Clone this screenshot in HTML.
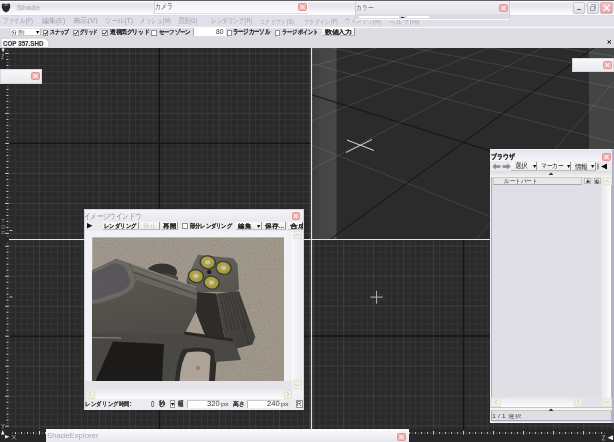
<!DOCTYPE html><html><head><meta charset="utf-8"><style>*{margin:0;padding:0;box-sizing:border-box}
html,body{width:614px;height:442px;overflow:hidden}
body{position:relative;background:#e2e2e9;font-family:"Liberation Sans",sans-serif;color:#222}
.a{position:absolute}
.t{position:absolute;white-space:nowrap;line-height:1;transform-origin:0 0}
.cb{position:absolute;width:5.5px;height:5.5px;background:#fff;border:1px solid #909090}
.close{position:absolute;width:8.5px;height:8px;border-radius:1.5px;background:radial-gradient(#f8c8c8,#eea2a2);border:1px solid #e49494}
.close:before,.close:after{content:"";position:absolute;left:2.7px;top:0px;width:1.1px;height:6px;background:#fff;opacity:.6}
.close:before{transform:rotate(45deg)}.close:after{transform:rotate(-45deg)}
.btn{position:absolute;background:linear-gradient(#fafafa,#ececec);border-right:1px solid #9a9a9a;border-bottom:1px solid #bdbdbd}
</style></head><body>
<svg class="a" style="left:0;top:0" width="614" height="442"><defs><clipPath id="v1"><rect x="9.5" y="47.5" width="301.5" height="191.5"/></clipPath><clipPath id="v2"><rect x="9.5" y="240" width="301.5" height="189.5"/></clipPath><clipPath id="v3"><rect x="312" y="240" width="302" height="189.5"/></clipPath><clipPath id="pv"><rect x="312" y="47.5" width="302" height="191.5"/></clipPath></defs><rect x="0" y="47" width="614" height="395" fill="#272727" /><rect x="9.5" y="47.5" width="301.5" height="191.5" fill="#2a2a2a" /><g clip-path="url(#v1)"><line x1="9.30" y1="47.50" x2="9.30" y2="239.00" stroke="#3f3f3f" stroke-width="1"/><line x1="15.30" y1="47.50" x2="15.30" y2="239.00" stroke="#353535" stroke-width="1"/><line x1="21.30" y1="47.50" x2="21.30" y2="239.00" stroke="#353535" stroke-width="1"/><line x1="27.30" y1="47.50" x2="27.30" y2="239.00" stroke="#353535" stroke-width="1"/><line x1="33.30" y1="47.50" x2="33.30" y2="239.00" stroke="#353535" stroke-width="1"/><line x1="39.30" y1="47.50" x2="39.30" y2="239.00" stroke="#3f3f3f" stroke-width="1"/><line x1="45.30" y1="47.50" x2="45.30" y2="239.00" stroke="#353535" stroke-width="1"/><line x1="51.30" y1="47.50" x2="51.30" y2="239.00" stroke="#353535" stroke-width="1"/><line x1="57.30" y1="47.50" x2="57.30" y2="239.00" stroke="#353535" stroke-width="1"/><line x1="63.30" y1="47.50" x2="63.30" y2="239.00" stroke="#353535" stroke-width="1"/><line x1="69.30" y1="47.50" x2="69.30" y2="239.00" stroke="#3f3f3f" stroke-width="1"/><line x1="75.30" y1="47.50" x2="75.30" y2="239.00" stroke="#353535" stroke-width="1"/><line x1="81.30" y1="47.50" x2="81.30" y2="239.00" stroke="#353535" stroke-width="1"/><line x1="87.30" y1="47.50" x2="87.30" y2="239.00" stroke="#353535" stroke-width="1"/><line x1="93.30" y1="47.50" x2="93.30" y2="239.00" stroke="#353535" stroke-width="1"/><line x1="99.30" y1="47.50" x2="99.30" y2="239.00" stroke="#3f3f3f" stroke-width="1"/><line x1="105.30" y1="47.50" x2="105.30" y2="239.00" stroke="#353535" stroke-width="1"/><line x1="111.30" y1="47.50" x2="111.30" y2="239.00" stroke="#353535" stroke-width="1"/><line x1="117.30" y1="47.50" x2="117.30" y2="239.00" stroke="#353535" stroke-width="1"/><line x1="123.30" y1="47.50" x2="123.30" y2="239.00" stroke="#353535" stroke-width="1"/><line x1="129.30" y1="47.50" x2="129.30" y2="239.00" stroke="#3f3f3f" stroke-width="1"/><line x1="135.30" y1="47.50" x2="135.30" y2="239.00" stroke="#353535" stroke-width="1"/><line x1="141.30" y1="47.50" x2="141.30" y2="239.00" stroke="#353535" stroke-width="1"/><line x1="147.30" y1="47.50" x2="147.30" y2="239.00" stroke="#353535" stroke-width="1"/><line x1="153.30" y1="47.50" x2="153.30" y2="239.00" stroke="#353535" stroke-width="1"/><line x1="165.30" y1="47.50" x2="165.30" y2="239.00" stroke="#353535" stroke-width="1"/><line x1="171.30" y1="47.50" x2="171.30" y2="239.00" stroke="#353535" stroke-width="1"/><line x1="177.30" y1="47.50" x2="177.30" y2="239.00" stroke="#353535" stroke-width="1"/><line x1="183.30" y1="47.50" x2="183.30" y2="239.00" stroke="#353535" stroke-width="1"/><line x1="189.30" y1="47.50" x2="189.30" y2="239.00" stroke="#3f3f3f" stroke-width="1"/><line x1="195.30" y1="47.50" x2="195.30" y2="239.00" stroke="#353535" stroke-width="1"/><line x1="201.30" y1="47.50" x2="201.30" y2="239.00" stroke="#353535" stroke-width="1"/><line x1="207.30" y1="47.50" x2="207.30" y2="239.00" stroke="#353535" stroke-width="1"/><line x1="213.30" y1="47.50" x2="213.30" y2="239.00" stroke="#353535" stroke-width="1"/><line x1="219.30" y1="47.50" x2="219.30" y2="239.00" stroke="#3f3f3f" stroke-width="1"/><line x1="225.30" y1="47.50" x2="225.30" y2="239.00" stroke="#353535" stroke-width="1"/><line x1="231.30" y1="47.50" x2="231.30" y2="239.00" stroke="#353535" stroke-width="1"/><line x1="237.30" y1="47.50" x2="237.30" y2="239.00" stroke="#353535" stroke-width="1"/><line x1="243.30" y1="47.50" x2="243.30" y2="239.00" stroke="#353535" stroke-width="1"/><line x1="249.30" y1="47.50" x2="249.30" y2="239.00" stroke="#3f3f3f" stroke-width="1"/><line x1="255.30" y1="47.50" x2="255.30" y2="239.00" stroke="#353535" stroke-width="1"/><line x1="261.30" y1="47.50" x2="261.30" y2="239.00" stroke="#353535" stroke-width="1"/><line x1="267.30" y1="47.50" x2="267.30" y2="239.00" stroke="#353535" stroke-width="1"/><line x1="273.30" y1="47.50" x2="273.30" y2="239.00" stroke="#353535" stroke-width="1"/><line x1="279.30" y1="47.50" x2="279.30" y2="239.00" stroke="#3f3f3f" stroke-width="1"/><line x1="285.30" y1="47.50" x2="285.30" y2="239.00" stroke="#353535" stroke-width="1"/><line x1="291.30" y1="47.50" x2="291.30" y2="239.00" stroke="#353535" stroke-width="1"/><line x1="297.30" y1="47.50" x2="297.30" y2="239.00" stroke="#353535" stroke-width="1"/><line x1="303.30" y1="47.50" x2="303.30" y2="239.00" stroke="#353535" stroke-width="1"/><line x1="309.30" y1="47.50" x2="309.30" y2="239.00" stroke="#3f3f3f" stroke-width="1"/><line x1="9.50" y1="47.40" x2="311.00" y2="47.40" stroke="#353535" stroke-width="1"/><line x1="9.50" y1="53.40" x2="311.00" y2="53.40" stroke="#3f3f3f" stroke-width="1"/><line x1="9.50" y1="59.40" x2="311.00" y2="59.40" stroke="#353535" stroke-width="1"/><line x1="9.50" y1="65.40" x2="311.00" y2="65.40" stroke="#353535" stroke-width="1"/><line x1="9.50" y1="71.40" x2="311.00" y2="71.40" stroke="#353535" stroke-width="1"/><line x1="9.50" y1="77.40" x2="311.00" y2="77.40" stroke="#353535" stroke-width="1"/><line x1="9.50" y1="83.40" x2="311.00" y2="83.40" stroke="#3f3f3f" stroke-width="1"/><line x1="9.50" y1="89.40" x2="311.00" y2="89.40" stroke="#353535" stroke-width="1"/><line x1="9.50" y1="95.40" x2="311.00" y2="95.40" stroke="#353535" stroke-width="1"/><line x1="9.50" y1="101.40" x2="311.00" y2="101.40" stroke="#353535" stroke-width="1"/><line x1="9.50" y1="107.40" x2="311.00" y2="107.40" stroke="#353535" stroke-width="1"/><line x1="9.50" y1="113.40" x2="311.00" y2="113.40" stroke="#3f3f3f" stroke-width="1"/><line x1="9.50" y1="119.40" x2="311.00" y2="119.40" stroke="#353535" stroke-width="1"/><line x1="9.50" y1="125.40" x2="311.00" y2="125.40" stroke="#353535" stroke-width="1"/><line x1="9.50" y1="131.40" x2="311.00" y2="131.40" stroke="#353535" stroke-width="1"/><line x1="9.50" y1="137.40" x2="311.00" y2="137.40" stroke="#353535" stroke-width="1"/><line x1="9.50" y1="149.40" x2="311.00" y2="149.40" stroke="#353535" stroke-width="1"/><line x1="9.50" y1="155.40" x2="311.00" y2="155.40" stroke="#353535" stroke-width="1"/><line x1="9.50" y1="161.40" x2="311.00" y2="161.40" stroke="#353535" stroke-width="1"/><line x1="9.50" y1="167.40" x2="311.00" y2="167.40" stroke="#353535" stroke-width="1"/><line x1="9.50" y1="173.40" x2="311.00" y2="173.40" stroke="#3f3f3f" stroke-width="1"/><line x1="9.50" y1="179.40" x2="311.00" y2="179.40" stroke="#353535" stroke-width="1"/><line x1="9.50" y1="185.40" x2="311.00" y2="185.40" stroke="#353535" stroke-width="1"/><line x1="9.50" y1="191.40" x2="311.00" y2="191.40" stroke="#353535" stroke-width="1"/><line x1="9.50" y1="197.40" x2="311.00" y2="197.40" stroke="#353535" stroke-width="1"/><line x1="9.50" y1="203.40" x2="311.00" y2="203.40" stroke="#3f3f3f" stroke-width="1"/><line x1="9.50" y1="209.40" x2="311.00" y2="209.40" stroke="#353535" stroke-width="1"/><line x1="9.50" y1="215.40" x2="311.00" y2="215.40" stroke="#353535" stroke-width="1"/><line x1="9.50" y1="221.40" x2="311.00" y2="221.40" stroke="#353535" stroke-width="1"/><line x1="9.50" y1="227.40" x2="311.00" y2="227.40" stroke="#353535" stroke-width="1"/><line x1="9.50" y1="233.40" x2="311.00" y2="233.40" stroke="#3f3f3f" stroke-width="1"/><line x1="159.30" y1="47.50" x2="159.30" y2="239.00" stroke="#141414" stroke-width="1.3"/><line x1="9.50" y1="143.40" x2="311.00" y2="143.40" stroke="#141414" stroke-width="1.3"/></g><rect x="9.5" y="240" width="301.5" height="189.5" fill="#2a2a2a" /><g clip-path="url(#v2)"><line x1="9.50" y1="240.00" x2="9.50" y2="429.50" stroke="#3f3f3f" stroke-width="1"/><line x1="15.50" y1="240.00" x2="15.50" y2="429.50" stroke="#353535" stroke-width="1"/><line x1="21.50" y1="240.00" x2="21.50" y2="429.50" stroke="#353535" stroke-width="1"/><line x1="27.50" y1="240.00" x2="27.50" y2="429.50" stroke="#353535" stroke-width="1"/><line x1="33.50" y1="240.00" x2="33.50" y2="429.50" stroke="#353535" stroke-width="1"/><line x1="39.50" y1="240.00" x2="39.50" y2="429.50" stroke="#3f3f3f" stroke-width="1"/><line x1="45.50" y1="240.00" x2="45.50" y2="429.50" stroke="#353535" stroke-width="1"/><line x1="51.50" y1="240.00" x2="51.50" y2="429.50" stroke="#353535" stroke-width="1"/><line x1="57.50" y1="240.00" x2="57.50" y2="429.50" stroke="#353535" stroke-width="1"/><line x1="63.50" y1="240.00" x2="63.50" y2="429.50" stroke="#353535" stroke-width="1"/><line x1="69.50" y1="240.00" x2="69.50" y2="429.50" stroke="#3f3f3f" stroke-width="1"/><line x1="75.50" y1="240.00" x2="75.50" y2="429.50" stroke="#353535" stroke-width="1"/><line x1="81.50" y1="240.00" x2="81.50" y2="429.50" stroke="#353535" stroke-width="1"/><line x1="87.50" y1="240.00" x2="87.50" y2="429.50" stroke="#353535" stroke-width="1"/><line x1="93.50" y1="240.00" x2="93.50" y2="429.50" stroke="#353535" stroke-width="1"/><line x1="99.50" y1="240.00" x2="99.50" y2="429.50" stroke="#3f3f3f" stroke-width="1"/><line x1="105.50" y1="240.00" x2="105.50" y2="429.50" stroke="#353535" stroke-width="1"/><line x1="111.50" y1="240.00" x2="111.50" y2="429.50" stroke="#353535" stroke-width="1"/><line x1="117.50" y1="240.00" x2="117.50" y2="429.50" stroke="#353535" stroke-width="1"/><line x1="123.50" y1="240.00" x2="123.50" y2="429.50" stroke="#353535" stroke-width="1"/><line x1="129.50" y1="240.00" x2="129.50" y2="429.50" stroke="#3f3f3f" stroke-width="1"/><line x1="135.50" y1="240.00" x2="135.50" y2="429.50" stroke="#353535" stroke-width="1"/><line x1="141.50" y1="240.00" x2="141.50" y2="429.50" stroke="#353535" stroke-width="1"/><line x1="147.50" y1="240.00" x2="147.50" y2="429.50" stroke="#353535" stroke-width="1"/><line x1="153.50" y1="240.00" x2="153.50" y2="429.50" stroke="#353535" stroke-width="1"/><line x1="165.50" y1="240.00" x2="165.50" y2="429.50" stroke="#353535" stroke-width="1"/><line x1="171.50" y1="240.00" x2="171.50" y2="429.50" stroke="#353535" stroke-width="1"/><line x1="177.50" y1="240.00" x2="177.50" y2="429.50" stroke="#353535" stroke-width="1"/><line x1="183.50" y1="240.00" x2="183.50" y2="429.50" stroke="#353535" stroke-width="1"/><line x1="189.50" y1="240.00" x2="189.50" y2="429.50" stroke="#3f3f3f" stroke-width="1"/><line x1="195.50" y1="240.00" x2="195.50" y2="429.50" stroke="#353535" stroke-width="1"/><line x1="201.50" y1="240.00" x2="201.50" y2="429.50" stroke="#353535" stroke-width="1"/><line x1="207.50" y1="240.00" x2="207.50" y2="429.50" stroke="#353535" stroke-width="1"/><line x1="213.50" y1="240.00" x2="213.50" y2="429.50" stroke="#353535" stroke-width="1"/><line x1="219.50" y1="240.00" x2="219.50" y2="429.50" stroke="#3f3f3f" stroke-width="1"/><line x1="225.50" y1="240.00" x2="225.50" y2="429.50" stroke="#353535" stroke-width="1"/><line x1="231.50" y1="240.00" x2="231.50" y2="429.50" stroke="#353535" stroke-width="1"/><line x1="237.50" y1="240.00" x2="237.50" y2="429.50" stroke="#353535" stroke-width="1"/><line x1="243.50" y1="240.00" x2="243.50" y2="429.50" stroke="#353535" stroke-width="1"/><line x1="249.50" y1="240.00" x2="249.50" y2="429.50" stroke="#3f3f3f" stroke-width="1"/><line x1="255.50" y1="240.00" x2="255.50" y2="429.50" stroke="#353535" stroke-width="1"/><line x1="261.50" y1="240.00" x2="261.50" y2="429.50" stroke="#353535" stroke-width="1"/><line x1="267.50" y1="240.00" x2="267.50" y2="429.50" stroke="#353535" stroke-width="1"/><line x1="273.50" y1="240.00" x2="273.50" y2="429.50" stroke="#353535" stroke-width="1"/><line x1="279.50" y1="240.00" x2="279.50" y2="429.50" stroke="#3f3f3f" stroke-width="1"/><line x1="285.50" y1="240.00" x2="285.50" y2="429.50" stroke="#353535" stroke-width="1"/><line x1="291.50" y1="240.00" x2="291.50" y2="429.50" stroke="#353535" stroke-width="1"/><line x1="297.50" y1="240.00" x2="297.50" y2="429.50" stroke="#353535" stroke-width="1"/><line x1="303.50" y1="240.00" x2="303.50" y2="429.50" stroke="#353535" stroke-width="1"/><line x1="309.50" y1="240.00" x2="309.50" y2="429.50" stroke="#3f3f3f" stroke-width="1"/><line x1="9.50" y1="234.20" x2="311.00" y2="234.20" stroke="#353535" stroke-width="1"/><line x1="9.50" y1="240.20" x2="311.00" y2="240.20" stroke="#353535" stroke-width="1"/><line x1="9.50" y1="246.20" x2="311.00" y2="246.20" stroke="#3f3f3f" stroke-width="1"/><line x1="9.50" y1="252.20" x2="311.00" y2="252.20" stroke="#353535" stroke-width="1"/><line x1="9.50" y1="258.20" x2="311.00" y2="258.20" stroke="#353535" stroke-width="1"/><line x1="9.50" y1="264.20" x2="311.00" y2="264.20" stroke="#353535" stroke-width="1"/><line x1="9.50" y1="270.20" x2="311.00" y2="270.20" stroke="#353535" stroke-width="1"/><line x1="9.50" y1="276.20" x2="311.00" y2="276.20" stroke="#3f3f3f" stroke-width="1"/><line x1="9.50" y1="282.20" x2="311.00" y2="282.20" stroke="#353535" stroke-width="1"/><line x1="9.50" y1="288.20" x2="311.00" y2="288.20" stroke="#353535" stroke-width="1"/><line x1="9.50" y1="294.20" x2="311.00" y2="294.20" stroke="#353535" stroke-width="1"/><line x1="9.50" y1="300.20" x2="311.00" y2="300.20" stroke="#353535" stroke-width="1"/><line x1="9.50" y1="306.20" x2="311.00" y2="306.20" stroke="#3f3f3f" stroke-width="1"/><line x1="9.50" y1="312.20" x2="311.00" y2="312.20" stroke="#353535" stroke-width="1"/><line x1="9.50" y1="318.20" x2="311.00" y2="318.20" stroke="#353535" stroke-width="1"/><line x1="9.50" y1="324.20" x2="311.00" y2="324.20" stroke="#353535" stroke-width="1"/><line x1="9.50" y1="330.20" x2="311.00" y2="330.20" stroke="#353535" stroke-width="1"/><line x1="9.50" y1="342.20" x2="311.00" y2="342.20" stroke="#353535" stroke-width="1"/><line x1="9.50" y1="348.20" x2="311.00" y2="348.20" stroke="#353535" stroke-width="1"/><line x1="9.50" y1="354.20" x2="311.00" y2="354.20" stroke="#353535" stroke-width="1"/><line x1="9.50" y1="360.20" x2="311.00" y2="360.20" stroke="#353535" stroke-width="1"/><line x1="9.50" y1="366.20" x2="311.00" y2="366.20" stroke="#3f3f3f" stroke-width="1"/><line x1="9.50" y1="372.20" x2="311.00" y2="372.20" stroke="#353535" stroke-width="1"/><line x1="9.50" y1="378.20" x2="311.00" y2="378.20" stroke="#353535" stroke-width="1"/><line x1="9.50" y1="384.20" x2="311.00" y2="384.20" stroke="#353535" stroke-width="1"/><line x1="9.50" y1="390.20" x2="311.00" y2="390.20" stroke="#353535" stroke-width="1"/><line x1="9.50" y1="396.20" x2="311.00" y2="396.20" stroke="#3f3f3f" stroke-width="1"/><line x1="9.50" y1="402.20" x2="311.00" y2="402.20" stroke="#353535" stroke-width="1"/><line x1="9.50" y1="408.20" x2="311.00" y2="408.20" stroke="#353535" stroke-width="1"/><line x1="9.50" y1="414.20" x2="311.00" y2="414.20" stroke="#353535" stroke-width="1"/><line x1="9.50" y1="420.20" x2="311.00" y2="420.20" stroke="#353535" stroke-width="1"/><line x1="9.50" y1="426.20" x2="311.00" y2="426.20" stroke="#3f3f3f" stroke-width="1"/><line x1="159.50" y1="240.00" x2="159.50" y2="429.50" stroke="#141414" stroke-width="1.3"/><line x1="9.50" y1="336.20" x2="311.00" y2="336.20" stroke="#141414" stroke-width="1.3"/></g><rect x="312" y="240" width="302" height="189.5" fill="#2a2a2a" /><g clip-path="url(#v3)"><line x1="307.60" y1="240.00" x2="307.60" y2="429.50" stroke="#353535" stroke-width="1"/><line x1="313.60" y1="240.00" x2="313.60" y2="429.50" stroke="#3f3f3f" stroke-width="1"/><line x1="319.60" y1="240.00" x2="319.60" y2="429.50" stroke="#353535" stroke-width="1"/><line x1="325.60" y1="240.00" x2="325.60" y2="429.50" stroke="#353535" stroke-width="1"/><line x1="331.60" y1="240.00" x2="331.60" y2="429.50" stroke="#353535" stroke-width="1"/><line x1="337.60" y1="240.00" x2="337.60" y2="429.50" stroke="#353535" stroke-width="1"/><line x1="343.60" y1="240.00" x2="343.60" y2="429.50" stroke="#3f3f3f" stroke-width="1"/><line x1="349.60" y1="240.00" x2="349.60" y2="429.50" stroke="#353535" stroke-width="1"/><line x1="355.60" y1="240.00" x2="355.60" y2="429.50" stroke="#353535" stroke-width="1"/><line x1="361.60" y1="240.00" x2="361.60" y2="429.50" stroke="#353535" stroke-width="1"/><line x1="367.60" y1="240.00" x2="367.60" y2="429.50" stroke="#353535" stroke-width="1"/><line x1="373.60" y1="240.00" x2="373.60" y2="429.50" stroke="#3f3f3f" stroke-width="1"/><line x1="379.60" y1="240.00" x2="379.60" y2="429.50" stroke="#353535" stroke-width="1"/><line x1="385.60" y1="240.00" x2="385.60" y2="429.50" stroke="#353535" stroke-width="1"/><line x1="391.60" y1="240.00" x2="391.60" y2="429.50" stroke="#353535" stroke-width="1"/><line x1="397.60" y1="240.00" x2="397.60" y2="429.50" stroke="#353535" stroke-width="1"/><line x1="403.60" y1="240.00" x2="403.60" y2="429.50" stroke="#3f3f3f" stroke-width="1"/><line x1="409.60" y1="240.00" x2="409.60" y2="429.50" stroke="#353535" stroke-width="1"/><line x1="415.60" y1="240.00" x2="415.60" y2="429.50" stroke="#353535" stroke-width="1"/><line x1="421.60" y1="240.00" x2="421.60" y2="429.50" stroke="#353535" stroke-width="1"/><line x1="427.60" y1="240.00" x2="427.60" y2="429.50" stroke="#353535" stroke-width="1"/><line x1="433.60" y1="240.00" x2="433.60" y2="429.50" stroke="#3f3f3f" stroke-width="1"/><line x1="439.60" y1="240.00" x2="439.60" y2="429.50" stroke="#353535" stroke-width="1"/><line x1="445.60" y1="240.00" x2="445.60" y2="429.50" stroke="#353535" stroke-width="1"/><line x1="451.60" y1="240.00" x2="451.60" y2="429.50" stroke="#353535" stroke-width="1"/><line x1="457.60" y1="240.00" x2="457.60" y2="429.50" stroke="#353535" stroke-width="1"/><line x1="469.60" y1="240.00" x2="469.60" y2="429.50" stroke="#353535" stroke-width="1"/><line x1="475.60" y1="240.00" x2="475.60" y2="429.50" stroke="#353535" stroke-width="1"/><line x1="481.60" y1="240.00" x2="481.60" y2="429.50" stroke="#353535" stroke-width="1"/><line x1="487.60" y1="240.00" x2="487.60" y2="429.50" stroke="#353535" stroke-width="1"/><line x1="493.60" y1="240.00" x2="493.60" y2="429.50" stroke="#3f3f3f" stroke-width="1"/><line x1="499.60" y1="240.00" x2="499.60" y2="429.50" stroke="#353535" stroke-width="1"/><line x1="505.60" y1="240.00" x2="505.60" y2="429.50" stroke="#353535" stroke-width="1"/><line x1="511.60" y1="240.00" x2="511.60" y2="429.50" stroke="#353535" stroke-width="1"/><line x1="517.60" y1="240.00" x2="517.60" y2="429.50" stroke="#353535" stroke-width="1"/><line x1="523.60" y1="240.00" x2="523.60" y2="429.50" stroke="#3f3f3f" stroke-width="1"/><line x1="529.60" y1="240.00" x2="529.60" y2="429.50" stroke="#353535" stroke-width="1"/><line x1="535.60" y1="240.00" x2="535.60" y2="429.50" stroke="#353535" stroke-width="1"/><line x1="541.60" y1="240.00" x2="541.60" y2="429.50" stroke="#353535" stroke-width="1"/><line x1="547.60" y1="240.00" x2="547.60" y2="429.50" stroke="#353535" stroke-width="1"/><line x1="553.60" y1="240.00" x2="553.60" y2="429.50" stroke="#3f3f3f" stroke-width="1"/><line x1="559.60" y1="240.00" x2="559.60" y2="429.50" stroke="#353535" stroke-width="1"/><line x1="565.60" y1="240.00" x2="565.60" y2="429.50" stroke="#353535" stroke-width="1"/><line x1="571.60" y1="240.00" x2="571.60" y2="429.50" stroke="#353535" stroke-width="1"/><line x1="577.60" y1="240.00" x2="577.60" y2="429.50" stroke="#353535" stroke-width="1"/><line x1="583.60" y1="240.00" x2="583.60" y2="429.50" stroke="#3f3f3f" stroke-width="1"/><line x1="589.60" y1="240.00" x2="589.60" y2="429.50" stroke="#353535" stroke-width="1"/><line x1="595.60" y1="240.00" x2="595.60" y2="429.50" stroke="#353535" stroke-width="1"/><line x1="601.60" y1="240.00" x2="601.60" y2="429.50" stroke="#353535" stroke-width="1"/><line x1="607.60" y1="240.00" x2="607.60" y2="429.50" stroke="#353535" stroke-width="1"/><line x1="613.60" y1="240.00" x2="613.60" y2="429.50" stroke="#3f3f3f" stroke-width="1"/><line x1="312.00" y1="240.00" x2="614.00" y2="240.00" stroke="#353535" stroke-width="1"/><line x1="312.00" y1="246.00" x2="614.00" y2="246.00" stroke="#3f3f3f" stroke-width="1"/><line x1="312.00" y1="252.00" x2="614.00" y2="252.00" stroke="#353535" stroke-width="1"/><line x1="312.00" y1="258.00" x2="614.00" y2="258.00" stroke="#353535" stroke-width="1"/><line x1="312.00" y1="264.00" x2="614.00" y2="264.00" stroke="#353535" stroke-width="1"/><line x1="312.00" y1="270.00" x2="614.00" y2="270.00" stroke="#353535" stroke-width="1"/><line x1="312.00" y1="276.00" x2="614.00" y2="276.00" stroke="#3f3f3f" stroke-width="1"/><line x1="312.00" y1="282.00" x2="614.00" y2="282.00" stroke="#353535" stroke-width="1"/><line x1="312.00" y1="288.00" x2="614.00" y2="288.00" stroke="#353535" stroke-width="1"/><line x1="312.00" y1="294.00" x2="614.00" y2="294.00" stroke="#353535" stroke-width="1"/><line x1="312.00" y1="300.00" x2="614.00" y2="300.00" stroke="#353535" stroke-width="1"/><line x1="312.00" y1="306.00" x2="614.00" y2="306.00" stroke="#3f3f3f" stroke-width="1"/><line x1="312.00" y1="312.00" x2="614.00" y2="312.00" stroke="#353535" stroke-width="1"/><line x1="312.00" y1="318.00" x2="614.00" y2="318.00" stroke="#353535" stroke-width="1"/><line x1="312.00" y1="324.00" x2="614.00" y2="324.00" stroke="#353535" stroke-width="1"/><line x1="312.00" y1="330.00" x2="614.00" y2="330.00" stroke="#353535" stroke-width="1"/><line x1="312.00" y1="342.00" x2="614.00" y2="342.00" stroke="#353535" stroke-width="1"/><line x1="312.00" y1="348.00" x2="614.00" y2="348.00" stroke="#353535" stroke-width="1"/><line x1="312.00" y1="354.00" x2="614.00" y2="354.00" stroke="#353535" stroke-width="1"/><line x1="312.00" y1="360.00" x2="614.00" y2="360.00" stroke="#353535" stroke-width="1"/><line x1="312.00" y1="366.00" x2="614.00" y2="366.00" stroke="#3f3f3f" stroke-width="1"/><line x1="312.00" y1="372.00" x2="614.00" y2="372.00" stroke="#353535" stroke-width="1"/><line x1="312.00" y1="378.00" x2="614.00" y2="378.00" stroke="#353535" stroke-width="1"/><line x1="312.00" y1="384.00" x2="614.00" y2="384.00" stroke="#353535" stroke-width="1"/><line x1="312.00" y1="390.00" x2="614.00" y2="390.00" stroke="#353535" stroke-width="1"/><line x1="312.00" y1="396.00" x2="614.00" y2="396.00" stroke="#3f3f3f" stroke-width="1"/><line x1="312.00" y1="402.00" x2="614.00" y2="402.00" stroke="#353535" stroke-width="1"/><line x1="312.00" y1="408.00" x2="614.00" y2="408.00" stroke="#353535" stroke-width="1"/><line x1="312.00" y1="414.00" x2="614.00" y2="414.00" stroke="#353535" stroke-width="1"/><line x1="312.00" y1="420.00" x2="614.00" y2="420.00" stroke="#353535" stroke-width="1"/><line x1="312.00" y1="426.00" x2="614.00" y2="426.00" stroke="#3f3f3f" stroke-width="1"/><line x1="463.60" y1="240.00" x2="463.60" y2="429.50" stroke="#141414" stroke-width="1.3"/><line x1="312.00" y1="336.00" x2="614.00" y2="336.00" stroke="#141414" stroke-width="1.3"/></g><line x1="7.00" y1="50.40" x2="8.30" y2="50.40" stroke="#707070" stroke-width="1"/><line x1="5.30" y1="53.40" x2="8.80" y2="53.40" stroke="#dcdcdc" stroke-width="1"/><line x1="7.00" y1="56.40" x2="8.30" y2="56.40" stroke="#707070" stroke-width="1"/><line x1="6.30" y1="59.40" x2="8.50" y2="59.40" stroke="#c4c4c4" stroke-width="1"/><line x1="7.00" y1="62.40" x2="8.30" y2="62.40" stroke="#707070" stroke-width="1"/><line x1="6.30" y1="65.40" x2="8.50" y2="65.40" stroke="#c4c4c4" stroke-width="1"/><line x1="7.00" y1="68.40" x2="8.30" y2="68.40" stroke="#707070" stroke-width="1"/><line x1="6.30" y1="71.40" x2="8.50" y2="71.40" stroke="#c4c4c4" stroke-width="1"/><line x1="7.00" y1="74.40" x2="8.30" y2="74.40" stroke="#707070" stroke-width="1"/><line x1="6.30" y1="77.40" x2="8.50" y2="77.40" stroke="#c4c4c4" stroke-width="1"/><line x1="7.00" y1="80.40" x2="8.30" y2="80.40" stroke="#707070" stroke-width="1"/><line x1="5.30" y1="83.40" x2="8.80" y2="83.40" stroke="#dcdcdc" stroke-width="1"/><line x1="7.00" y1="86.40" x2="8.30" y2="86.40" stroke="#707070" stroke-width="1"/><line x1="6.30" y1="89.40" x2="8.50" y2="89.40" stroke="#c4c4c4" stroke-width="1"/><line x1="7.00" y1="92.40" x2="8.30" y2="92.40" stroke="#707070" stroke-width="1"/><line x1="6.30" y1="95.40" x2="8.50" y2="95.40" stroke="#c4c4c4" stroke-width="1"/><line x1="7.00" y1="98.40" x2="8.30" y2="98.40" stroke="#707070" stroke-width="1"/><line x1="6.30" y1="101.40" x2="8.50" y2="101.40" stroke="#c4c4c4" stroke-width="1"/><line x1="7.00" y1="104.40" x2="8.30" y2="104.40" stroke="#707070" stroke-width="1"/><line x1="6.30" y1="107.40" x2="8.50" y2="107.40" stroke="#c4c4c4" stroke-width="1"/><line x1="7.00" y1="110.40" x2="8.30" y2="110.40" stroke="#707070" stroke-width="1"/><line x1="5.30" y1="113.40" x2="8.80" y2="113.40" stroke="#dcdcdc" stroke-width="1"/><line x1="7.00" y1="116.40" x2="8.30" y2="116.40" stroke="#707070" stroke-width="1"/><line x1="6.30" y1="119.40" x2="8.50" y2="119.40" stroke="#c4c4c4" stroke-width="1"/><line x1="7.00" y1="122.40" x2="8.30" y2="122.40" stroke="#707070" stroke-width="1"/><line x1="6.30" y1="125.40" x2="8.50" y2="125.40" stroke="#c4c4c4" stroke-width="1"/><line x1="7.00" y1="128.40" x2="8.30" y2="128.40" stroke="#707070" stroke-width="1"/><line x1="6.30" y1="131.40" x2="8.50" y2="131.40" stroke="#c4c4c4" stroke-width="1"/><line x1="7.00" y1="134.40" x2="8.30" y2="134.40" stroke="#707070" stroke-width="1"/><line x1="6.30" y1="137.40" x2="8.50" y2="137.40" stroke="#c4c4c4" stroke-width="1"/><line x1="7.00" y1="140.40" x2="8.30" y2="140.40" stroke="#707070" stroke-width="1"/><line x1="5.30" y1="143.40" x2="8.80" y2="143.40" stroke="#dcdcdc" stroke-width="1"/><line x1="7.00" y1="146.40" x2="8.30" y2="146.40" stroke="#707070" stroke-width="1"/><line x1="6.30" y1="149.40" x2="8.50" y2="149.40" stroke="#c4c4c4" stroke-width="1"/><line x1="7.00" y1="152.40" x2="8.30" y2="152.40" stroke="#707070" stroke-width="1"/><line x1="6.30" y1="155.40" x2="8.50" y2="155.40" stroke="#c4c4c4" stroke-width="1"/><line x1="7.00" y1="158.40" x2="8.30" y2="158.40" stroke="#707070" stroke-width="1"/><line x1="6.30" y1="161.40" x2="8.50" y2="161.40" stroke="#c4c4c4" stroke-width="1"/><line x1="7.00" y1="164.40" x2="8.30" y2="164.40" stroke="#707070" stroke-width="1"/><line x1="6.30" y1="167.40" x2="8.50" y2="167.40" stroke="#c4c4c4" stroke-width="1"/><line x1="7.00" y1="170.40" x2="8.30" y2="170.40" stroke="#707070" stroke-width="1"/><line x1="5.30" y1="173.40" x2="8.80" y2="173.40" stroke="#dcdcdc" stroke-width="1"/><line x1="7.00" y1="176.40" x2="8.30" y2="176.40" stroke="#707070" stroke-width="1"/><line x1="6.30" y1="179.40" x2="8.50" y2="179.40" stroke="#c4c4c4" stroke-width="1"/><line x1="7.00" y1="182.40" x2="8.30" y2="182.40" stroke="#707070" stroke-width="1"/><line x1="6.30" y1="185.40" x2="8.50" y2="185.40" stroke="#c4c4c4" stroke-width="1"/><line x1="7.00" y1="188.40" x2="8.30" y2="188.40" stroke="#707070" stroke-width="1"/><line x1="6.30" y1="191.40" x2="8.50" y2="191.40" stroke="#c4c4c4" stroke-width="1"/><line x1="7.00" y1="194.40" x2="8.30" y2="194.40" stroke="#707070" stroke-width="1"/><line x1="6.30" y1="197.40" x2="8.50" y2="197.40" stroke="#c4c4c4" stroke-width="1"/><line x1="7.00" y1="200.40" x2="8.30" y2="200.40" stroke="#707070" stroke-width="1"/><line x1="5.30" y1="203.40" x2="8.80" y2="203.40" stroke="#dcdcdc" stroke-width="1"/><line x1="7.00" y1="206.40" x2="8.30" y2="206.40" stroke="#707070" stroke-width="1"/><line x1="6.30" y1="209.40" x2="8.50" y2="209.40" stroke="#c4c4c4" stroke-width="1"/><line x1="7.00" y1="212.40" x2="8.30" y2="212.40" stroke="#707070" stroke-width="1"/><line x1="6.30" y1="215.40" x2="8.50" y2="215.40" stroke="#c4c4c4" stroke-width="1"/><line x1="7.00" y1="218.40" x2="8.30" y2="218.40" stroke="#707070" stroke-width="1"/><line x1="6.30" y1="221.40" x2="8.50" y2="221.40" stroke="#c4c4c4" stroke-width="1"/><line x1="7.00" y1="224.40" x2="8.30" y2="224.40" stroke="#707070" stroke-width="1"/><line x1="6.30" y1="227.40" x2="8.50" y2="227.40" stroke="#c4c4c4" stroke-width="1"/><line x1="7.00" y1="230.40" x2="8.30" y2="230.40" stroke="#707070" stroke-width="1"/><line x1="5.30" y1="233.40" x2="8.80" y2="233.40" stroke="#dcdcdc" stroke-width="1"/><line x1="7.00" y1="236.40" x2="8.30" y2="236.40" stroke="#707070" stroke-width="1"/><line x1="7.00" y1="243.20" x2="8.30" y2="243.20" stroke="#707070" stroke-width="1"/><line x1="5.30" y1="246.20" x2="8.80" y2="246.20" stroke="#dcdcdc" stroke-width="1"/><line x1="7.00" y1="249.20" x2="8.30" y2="249.20" stroke="#707070" stroke-width="1"/><line x1="6.30" y1="252.20" x2="8.50" y2="252.20" stroke="#c4c4c4" stroke-width="1"/><line x1="7.00" y1="255.20" x2="8.30" y2="255.20" stroke="#707070" stroke-width="1"/><line x1="6.30" y1="258.20" x2="8.50" y2="258.20" stroke="#c4c4c4" stroke-width="1"/><line x1="7.00" y1="261.20" x2="8.30" y2="261.20" stroke="#707070" stroke-width="1"/><line x1="6.30" y1="264.20" x2="8.50" y2="264.20" stroke="#c4c4c4" stroke-width="1"/><line x1="7.00" y1="267.20" x2="8.30" y2="267.20" stroke="#707070" stroke-width="1"/><line x1="6.30" y1="270.20" x2="8.50" y2="270.20" stroke="#c4c4c4" stroke-width="1"/><line x1="7.00" y1="273.20" x2="8.30" y2="273.20" stroke="#707070" stroke-width="1"/><line x1="5.30" y1="276.20" x2="8.80" y2="276.20" stroke="#dcdcdc" stroke-width="1"/><line x1="7.00" y1="279.20" x2="8.30" y2="279.20" stroke="#707070" stroke-width="1"/><line x1="6.30" y1="282.20" x2="8.50" y2="282.20" stroke="#c4c4c4" stroke-width="1"/><line x1="7.00" y1="285.20" x2="8.30" y2="285.20" stroke="#707070" stroke-width="1"/><line x1="6.30" y1="288.20" x2="8.50" y2="288.20" stroke="#c4c4c4" stroke-width="1"/><line x1="7.00" y1="291.20" x2="8.30" y2="291.20" stroke="#707070" stroke-width="1"/><line x1="6.30" y1="294.20" x2="8.50" y2="294.20" stroke="#c4c4c4" stroke-width="1"/><line x1="7.00" y1="297.20" x2="8.30" y2="297.20" stroke="#707070" stroke-width="1"/><line x1="6.30" y1="300.20" x2="8.50" y2="300.20" stroke="#c4c4c4" stroke-width="1"/><line x1="7.00" y1="303.20" x2="8.30" y2="303.20" stroke="#707070" stroke-width="1"/><line x1="5.30" y1="306.20" x2="8.80" y2="306.20" stroke="#dcdcdc" stroke-width="1"/><line x1="7.00" y1="309.20" x2="8.30" y2="309.20" stroke="#707070" stroke-width="1"/><line x1="6.30" y1="312.20" x2="8.50" y2="312.20" stroke="#c4c4c4" stroke-width="1"/><line x1="7.00" y1="315.20" x2="8.30" y2="315.20" stroke="#707070" stroke-width="1"/><line x1="6.30" y1="318.20" x2="8.50" y2="318.20" stroke="#c4c4c4" stroke-width="1"/><line x1="7.00" y1="321.20" x2="8.30" y2="321.20" stroke="#707070" stroke-width="1"/><line x1="6.30" y1="324.20" x2="8.50" y2="324.20" stroke="#c4c4c4" stroke-width="1"/><line x1="7.00" y1="327.20" x2="8.30" y2="327.20" stroke="#707070" stroke-width="1"/><line x1="6.30" y1="330.20" x2="8.50" y2="330.20" stroke="#c4c4c4" stroke-width="1"/><line x1="7.00" y1="333.20" x2="8.30" y2="333.20" stroke="#707070" stroke-width="1"/><line x1="5.30" y1="336.20" x2="8.80" y2="336.20" stroke="#dcdcdc" stroke-width="1"/><line x1="7.00" y1="339.20" x2="8.30" y2="339.20" stroke="#707070" stroke-width="1"/><line x1="6.30" y1="342.20" x2="8.50" y2="342.20" stroke="#c4c4c4" stroke-width="1"/><line x1="7.00" y1="345.20" x2="8.30" y2="345.20" stroke="#707070" stroke-width="1"/><line x1="6.30" y1="348.20" x2="8.50" y2="348.20" stroke="#c4c4c4" stroke-width="1"/><line x1="7.00" y1="351.20" x2="8.30" y2="351.20" stroke="#707070" stroke-width="1"/><line x1="6.30" y1="354.20" x2="8.50" y2="354.20" stroke="#c4c4c4" stroke-width="1"/><line x1="7.00" y1="357.20" x2="8.30" y2="357.20" stroke="#707070" stroke-width="1"/><line x1="6.30" y1="360.20" x2="8.50" y2="360.20" stroke="#c4c4c4" stroke-width="1"/><line x1="7.00" y1="363.20" x2="8.30" y2="363.20" stroke="#707070" stroke-width="1"/><line x1="5.30" y1="366.20" x2="8.80" y2="366.20" stroke="#dcdcdc" stroke-width="1"/><line x1="7.00" y1="369.20" x2="8.30" y2="369.20" stroke="#707070" stroke-width="1"/><line x1="6.30" y1="372.20" x2="8.50" y2="372.20" stroke="#c4c4c4" stroke-width="1"/><line x1="7.00" y1="375.20" x2="8.30" y2="375.20" stroke="#707070" stroke-width="1"/><line x1="6.30" y1="378.20" x2="8.50" y2="378.20" stroke="#c4c4c4" stroke-width="1"/><line x1="7.00" y1="381.20" x2="8.30" y2="381.20" stroke="#707070" stroke-width="1"/><line x1="6.30" y1="384.20" x2="8.50" y2="384.20" stroke="#c4c4c4" stroke-width="1"/><line x1="7.00" y1="387.20" x2="8.30" y2="387.20" stroke="#707070" stroke-width="1"/><line x1="6.30" y1="390.20" x2="8.50" y2="390.20" stroke="#c4c4c4" stroke-width="1"/><line x1="7.00" y1="393.20" x2="8.30" y2="393.20" stroke="#707070" stroke-width="1"/><line x1="5.30" y1="396.20" x2="8.80" y2="396.20" stroke="#dcdcdc" stroke-width="1"/><line x1="7.00" y1="399.20" x2="8.30" y2="399.20" stroke="#707070" stroke-width="1"/><line x1="6.30" y1="402.20" x2="8.50" y2="402.20" stroke="#c4c4c4" stroke-width="1"/><line x1="7.00" y1="405.20" x2="8.30" y2="405.20" stroke="#707070" stroke-width="1"/><line x1="6.30" y1="408.20" x2="8.50" y2="408.20" stroke="#c4c4c4" stroke-width="1"/><line x1="7.00" y1="411.20" x2="8.30" y2="411.20" stroke="#707070" stroke-width="1"/><line x1="6.30" y1="414.20" x2="8.50" y2="414.20" stroke="#c4c4c4" stroke-width="1"/><line x1="7.00" y1="417.20" x2="8.30" y2="417.20" stroke="#707070" stroke-width="1"/><line x1="6.30" y1="420.20" x2="8.50" y2="420.20" stroke="#c4c4c4" stroke-width="1"/><line x1="7.00" y1="423.20" x2="8.30" y2="423.20" stroke="#707070" stroke-width="1"/><line x1="5.30" y1="426.20" x2="8.80" y2="426.20" stroke="#dcdcdc" stroke-width="1"/><line x1="9.50" y1="230.50" x2="12.50" y2="230.50" stroke="#bdbdbd" stroke-width="1"/><line x1="9.50" y1="297.00" x2="12.50" y2="297.00" stroke="#bdbdbd" stroke-width="1"/><line x1="12.50" y1="432.50" x2="12.50" y2="433.60" stroke="#707070" stroke-width="1"/><line x1="15.50" y1="432.00" x2="15.50" y2="434.00" stroke="#c4c4c4" stroke-width="1"/><line x1="18.50" y1="432.50" x2="18.50" y2="433.60" stroke="#707070" stroke-width="1"/><line x1="21.50" y1="432.00" x2="21.50" y2="434.00" stroke="#c4c4c4" stroke-width="1"/><line x1="24.50" y1="432.50" x2="24.50" y2="433.60" stroke="#707070" stroke-width="1"/><line x1="27.50" y1="432.00" x2="27.50" y2="434.00" stroke="#c4c4c4" stroke-width="1"/><line x1="30.50" y1="432.50" x2="30.50" y2="433.60" stroke="#707070" stroke-width="1"/><line x1="33.50" y1="432.00" x2="33.50" y2="434.00" stroke="#c4c4c4" stroke-width="1"/><line x1="36.50" y1="432.50" x2="36.50" y2="433.60" stroke="#707070" stroke-width="1"/><line x1="39.50" y1="431.00" x2="39.50" y2="434.50" stroke="#dcdcdc" stroke-width="1"/><line x1="42.50" y1="432.50" x2="42.50" y2="433.60" stroke="#707070" stroke-width="1"/><line x1="45.50" y1="432.00" x2="45.50" y2="434.00" stroke="#c4c4c4" stroke-width="1"/><line x1="48.50" y1="432.50" x2="48.50" y2="433.60" stroke="#707070" stroke-width="1"/><line x1="51.50" y1="432.00" x2="51.50" y2="434.00" stroke="#c4c4c4" stroke-width="1"/><line x1="54.50" y1="432.50" x2="54.50" y2="433.60" stroke="#707070" stroke-width="1"/><line x1="57.50" y1="432.00" x2="57.50" y2="434.00" stroke="#c4c4c4" stroke-width="1"/><line x1="60.50" y1="432.50" x2="60.50" y2="433.60" stroke="#707070" stroke-width="1"/><line x1="63.50" y1="432.00" x2="63.50" y2="434.00" stroke="#c4c4c4" stroke-width="1"/><line x1="66.50" y1="432.50" x2="66.50" y2="433.60" stroke="#707070" stroke-width="1"/><line x1="69.50" y1="431.00" x2="69.50" y2="434.50" stroke="#dcdcdc" stroke-width="1"/><line x1="72.50" y1="432.50" x2="72.50" y2="433.60" stroke="#707070" stroke-width="1"/><line x1="75.50" y1="432.00" x2="75.50" y2="434.00" stroke="#c4c4c4" stroke-width="1"/><line x1="78.50" y1="432.50" x2="78.50" y2="433.60" stroke="#707070" stroke-width="1"/><line x1="81.50" y1="432.00" x2="81.50" y2="434.00" stroke="#c4c4c4" stroke-width="1"/><line x1="84.50" y1="432.50" x2="84.50" y2="433.60" stroke="#707070" stroke-width="1"/><line x1="87.50" y1="432.00" x2="87.50" y2="434.00" stroke="#c4c4c4" stroke-width="1"/><line x1="90.50" y1="432.50" x2="90.50" y2="433.60" stroke="#707070" stroke-width="1"/><line x1="93.50" y1="432.00" x2="93.50" y2="434.00" stroke="#c4c4c4" stroke-width="1"/><line x1="96.50" y1="432.50" x2="96.50" y2="433.60" stroke="#707070" stroke-width="1"/><line x1="99.50" y1="431.00" x2="99.50" y2="434.50" stroke="#dcdcdc" stroke-width="1"/><line x1="102.50" y1="432.50" x2="102.50" y2="433.60" stroke="#707070" stroke-width="1"/><line x1="105.50" y1="432.00" x2="105.50" y2="434.00" stroke="#c4c4c4" stroke-width="1"/><line x1="108.50" y1="432.50" x2="108.50" y2="433.60" stroke="#707070" stroke-width="1"/><line x1="111.50" y1="432.00" x2="111.50" y2="434.00" stroke="#c4c4c4" stroke-width="1"/><line x1="114.50" y1="432.50" x2="114.50" y2="433.60" stroke="#707070" stroke-width="1"/><line x1="117.50" y1="432.00" x2="117.50" y2="434.00" stroke="#c4c4c4" stroke-width="1"/><line x1="120.50" y1="432.50" x2="120.50" y2="433.60" stroke="#707070" stroke-width="1"/><line x1="123.50" y1="432.00" x2="123.50" y2="434.00" stroke="#c4c4c4" stroke-width="1"/><line x1="126.50" y1="432.50" x2="126.50" y2="433.60" stroke="#707070" stroke-width="1"/><line x1="129.50" y1="431.00" x2="129.50" y2="434.50" stroke="#dcdcdc" stroke-width="1"/><line x1="132.50" y1="432.50" x2="132.50" y2="433.60" stroke="#707070" stroke-width="1"/><line x1="135.50" y1="432.00" x2="135.50" y2="434.00" stroke="#c4c4c4" stroke-width="1"/><line x1="138.50" y1="432.50" x2="138.50" y2="433.60" stroke="#707070" stroke-width="1"/><line x1="141.50" y1="432.00" x2="141.50" y2="434.00" stroke="#c4c4c4" stroke-width="1"/><line x1="144.50" y1="432.50" x2="144.50" y2="433.60" stroke="#707070" stroke-width="1"/><line x1="147.50" y1="432.00" x2="147.50" y2="434.00" stroke="#c4c4c4" stroke-width="1"/><line x1="150.50" y1="432.50" x2="150.50" y2="433.60" stroke="#707070" stroke-width="1"/><line x1="153.50" y1="432.00" x2="153.50" y2="434.00" stroke="#c4c4c4" stroke-width="1"/><line x1="156.50" y1="432.50" x2="156.50" y2="433.60" stroke="#707070" stroke-width="1"/><line x1="159.50" y1="431.00" x2="159.50" y2="434.50" stroke="#dcdcdc" stroke-width="1"/><line x1="162.50" y1="432.50" x2="162.50" y2="433.60" stroke="#707070" stroke-width="1"/><line x1="165.50" y1="432.00" x2="165.50" y2="434.00" stroke="#c4c4c4" stroke-width="1"/><line x1="168.50" y1="432.50" x2="168.50" y2="433.60" stroke="#707070" stroke-width="1"/><line x1="171.50" y1="432.00" x2="171.50" y2="434.00" stroke="#c4c4c4" stroke-width="1"/><line x1="174.50" y1="432.50" x2="174.50" y2="433.60" stroke="#707070" stroke-width="1"/><line x1="177.50" y1="432.00" x2="177.50" y2="434.00" stroke="#c4c4c4" stroke-width="1"/><line x1="180.50" y1="432.50" x2="180.50" y2="433.60" stroke="#707070" stroke-width="1"/><line x1="183.50" y1="432.00" x2="183.50" y2="434.00" stroke="#c4c4c4" stroke-width="1"/><line x1="186.50" y1="432.50" x2="186.50" y2="433.60" stroke="#707070" stroke-width="1"/><line x1="189.50" y1="431.00" x2="189.50" y2="434.50" stroke="#dcdcdc" stroke-width="1"/><line x1="192.50" y1="432.50" x2="192.50" y2="433.60" stroke="#707070" stroke-width="1"/><line x1="195.50" y1="432.00" x2="195.50" y2="434.00" stroke="#c4c4c4" stroke-width="1"/><line x1="198.50" y1="432.50" x2="198.50" y2="433.60" stroke="#707070" stroke-width="1"/><line x1="201.50" y1="432.00" x2="201.50" y2="434.00" stroke="#c4c4c4" stroke-width="1"/><line x1="204.50" y1="432.50" x2="204.50" y2="433.60" stroke="#707070" stroke-width="1"/><line x1="207.50" y1="432.00" x2="207.50" y2="434.00" stroke="#c4c4c4" stroke-width="1"/><line x1="210.50" y1="432.50" x2="210.50" y2="433.60" stroke="#707070" stroke-width="1"/><line x1="213.50" y1="432.00" x2="213.50" y2="434.00" stroke="#c4c4c4" stroke-width="1"/><line x1="216.50" y1="432.50" x2="216.50" y2="433.60" stroke="#707070" stroke-width="1"/><line x1="219.50" y1="431.00" x2="219.50" y2="434.50" stroke="#dcdcdc" stroke-width="1"/><line x1="222.50" y1="432.50" x2="222.50" y2="433.60" stroke="#707070" stroke-width="1"/><line x1="225.50" y1="432.00" x2="225.50" y2="434.00" stroke="#c4c4c4" stroke-width="1"/><line x1="228.50" y1="432.50" x2="228.50" y2="433.60" stroke="#707070" stroke-width="1"/><line x1="231.50" y1="432.00" x2="231.50" y2="434.00" stroke="#c4c4c4" stroke-width="1"/><line x1="234.50" y1="432.50" x2="234.50" y2="433.60" stroke="#707070" stroke-width="1"/><line x1="237.50" y1="432.00" x2="237.50" y2="434.00" stroke="#c4c4c4" stroke-width="1"/><line x1="240.50" y1="432.50" x2="240.50" y2="433.60" stroke="#707070" stroke-width="1"/><line x1="243.50" y1="432.00" x2="243.50" y2="434.00" stroke="#c4c4c4" stroke-width="1"/><line x1="246.50" y1="432.50" x2="246.50" y2="433.60" stroke="#707070" stroke-width="1"/><line x1="249.50" y1="431.00" x2="249.50" y2="434.50" stroke="#dcdcdc" stroke-width="1"/><line x1="252.50" y1="432.50" x2="252.50" y2="433.60" stroke="#707070" stroke-width="1"/><line x1="255.50" y1="432.00" x2="255.50" y2="434.00" stroke="#c4c4c4" stroke-width="1"/><line x1="258.50" y1="432.50" x2="258.50" y2="433.60" stroke="#707070" stroke-width="1"/><line x1="261.50" y1="432.00" x2="261.50" y2="434.00" stroke="#c4c4c4" stroke-width="1"/><line x1="264.50" y1="432.50" x2="264.50" y2="433.60" stroke="#707070" stroke-width="1"/><line x1="267.50" y1="432.00" x2="267.50" y2="434.00" stroke="#c4c4c4" stroke-width="1"/><line x1="270.50" y1="432.50" x2="270.50" y2="433.60" stroke="#707070" stroke-width="1"/><line x1="273.50" y1="432.00" x2="273.50" y2="434.00" stroke="#c4c4c4" stroke-width="1"/><line x1="276.50" y1="432.50" x2="276.50" y2="433.60" stroke="#707070" stroke-width="1"/><line x1="279.50" y1="431.00" x2="279.50" y2="434.50" stroke="#dcdcdc" stroke-width="1"/><line x1="282.50" y1="432.50" x2="282.50" y2="433.60" stroke="#707070" stroke-width="1"/><line x1="285.50" y1="432.00" x2="285.50" y2="434.00" stroke="#c4c4c4" stroke-width="1"/><line x1="288.50" y1="432.50" x2="288.50" y2="433.60" stroke="#707070" stroke-width="1"/><line x1="291.50" y1="432.00" x2="291.50" y2="434.00" stroke="#c4c4c4" stroke-width="1"/><line x1="294.50" y1="432.50" x2="294.50" y2="433.60" stroke="#707070" stroke-width="1"/><line x1="297.50" y1="432.00" x2="297.50" y2="434.00" stroke="#c4c4c4" stroke-width="1"/><line x1="300.50" y1="432.50" x2="300.50" y2="433.60" stroke="#707070" stroke-width="1"/><line x1="303.50" y1="432.00" x2="303.50" y2="434.00" stroke="#c4c4c4" stroke-width="1"/><line x1="306.50" y1="432.50" x2="306.50" y2="433.60" stroke="#707070" stroke-width="1"/><line x1="309.50" y1="431.00" x2="309.50" y2="434.50" stroke="#dcdcdc" stroke-width="1"/><line x1="313.60" y1="431.00" x2="313.60" y2="434.50" stroke="#dcdcdc" stroke-width="1"/><line x1="316.60" y1="432.50" x2="316.60" y2="433.60" stroke="#707070" stroke-width="1"/><line x1="319.60" y1="432.00" x2="319.60" y2="434.00" stroke="#c4c4c4" stroke-width="1"/><line x1="322.60" y1="432.50" x2="322.60" y2="433.60" stroke="#707070" stroke-width="1"/><line x1="325.60" y1="432.00" x2="325.60" y2="434.00" stroke="#c4c4c4" stroke-width="1"/><line x1="328.60" y1="432.50" x2="328.60" y2="433.60" stroke="#707070" stroke-width="1"/><line x1="331.60" y1="432.00" x2="331.60" y2="434.00" stroke="#c4c4c4" stroke-width="1"/><line x1="334.60" y1="432.50" x2="334.60" y2="433.60" stroke="#707070" stroke-width="1"/><line x1="337.60" y1="432.00" x2="337.60" y2="434.00" stroke="#c4c4c4" stroke-width="1"/><line x1="340.60" y1="432.50" x2="340.60" y2="433.60" stroke="#707070" stroke-width="1"/><line x1="343.60" y1="431.00" x2="343.60" y2="434.50" stroke="#dcdcdc" stroke-width="1"/><line x1="346.60" y1="432.50" x2="346.60" y2="433.60" stroke="#707070" stroke-width="1"/><line x1="349.60" y1="432.00" x2="349.60" y2="434.00" stroke="#c4c4c4" stroke-width="1"/><line x1="352.60" y1="432.50" x2="352.60" y2="433.60" stroke="#707070" stroke-width="1"/><line x1="355.60" y1="432.00" x2="355.60" y2="434.00" stroke="#c4c4c4" stroke-width="1"/><line x1="358.60" y1="432.50" x2="358.60" y2="433.60" stroke="#707070" stroke-width="1"/><line x1="361.60" y1="432.00" x2="361.60" y2="434.00" stroke="#c4c4c4" stroke-width="1"/><line x1="364.60" y1="432.50" x2="364.60" y2="433.60" stroke="#707070" stroke-width="1"/><line x1="367.60" y1="432.00" x2="367.60" y2="434.00" stroke="#c4c4c4" stroke-width="1"/><line x1="370.60" y1="432.50" x2="370.60" y2="433.60" stroke="#707070" stroke-width="1"/><line x1="373.60" y1="431.00" x2="373.60" y2="434.50" stroke="#dcdcdc" stroke-width="1"/><line x1="376.60" y1="432.50" x2="376.60" y2="433.60" stroke="#707070" stroke-width="1"/><line x1="379.60" y1="432.00" x2="379.60" y2="434.00" stroke="#c4c4c4" stroke-width="1"/><line x1="382.60" y1="432.50" x2="382.60" y2="433.60" stroke="#707070" stroke-width="1"/><line x1="385.60" y1="432.00" x2="385.60" y2="434.00" stroke="#c4c4c4" stroke-width="1"/><line x1="388.60" y1="432.50" x2="388.60" y2="433.60" stroke="#707070" stroke-width="1"/><line x1="391.60" y1="432.00" x2="391.60" y2="434.00" stroke="#c4c4c4" stroke-width="1"/><line x1="394.60" y1="432.50" x2="394.60" y2="433.60" stroke="#707070" stroke-width="1"/><line x1="397.60" y1="432.00" x2="397.60" y2="434.00" stroke="#c4c4c4" stroke-width="1"/><line x1="400.60" y1="432.50" x2="400.60" y2="433.60" stroke="#707070" stroke-width="1"/><line x1="403.60" y1="431.00" x2="403.60" y2="434.50" stroke="#dcdcdc" stroke-width="1"/><line x1="406.60" y1="432.50" x2="406.60" y2="433.60" stroke="#707070" stroke-width="1"/><line x1="409.60" y1="432.00" x2="409.60" y2="434.00" stroke="#c4c4c4" stroke-width="1"/><line x1="412.60" y1="432.50" x2="412.60" y2="433.60" stroke="#707070" stroke-width="1"/><line x1="415.60" y1="432.00" x2="415.60" y2="434.00" stroke="#c4c4c4" stroke-width="1"/><line x1="418.60" y1="432.50" x2="418.60" y2="433.60" stroke="#707070" stroke-width="1"/><line x1="421.60" y1="432.00" x2="421.60" y2="434.00" stroke="#c4c4c4" stroke-width="1"/><line x1="424.60" y1="432.50" x2="424.60" y2="433.60" stroke="#707070" stroke-width="1"/><line x1="427.60" y1="432.00" x2="427.60" y2="434.00" stroke="#c4c4c4" stroke-width="1"/><line x1="430.60" y1="432.50" x2="430.60" y2="433.60" stroke="#707070" stroke-width="1"/><line x1="433.60" y1="431.00" x2="433.60" y2="434.50" stroke="#dcdcdc" stroke-width="1"/><line x1="436.60" y1="432.50" x2="436.60" y2="433.60" stroke="#707070" stroke-width="1"/><line x1="439.60" y1="432.00" x2="439.60" y2="434.00" stroke="#c4c4c4" stroke-width="1"/><line x1="442.60" y1="432.50" x2="442.60" y2="433.60" stroke="#707070" stroke-width="1"/><line x1="445.60" y1="432.00" x2="445.60" y2="434.00" stroke="#c4c4c4" stroke-width="1"/><line x1="448.60" y1="432.50" x2="448.60" y2="433.60" stroke="#707070" stroke-width="1"/><line x1="451.60" y1="432.00" x2="451.60" y2="434.00" stroke="#c4c4c4" stroke-width="1"/><line x1="454.60" y1="432.50" x2="454.60" y2="433.60" stroke="#707070" stroke-width="1"/><line x1="457.60" y1="432.00" x2="457.60" y2="434.00" stroke="#c4c4c4" stroke-width="1"/><line x1="460.60" y1="432.50" x2="460.60" y2="433.60" stroke="#707070" stroke-width="1"/><line x1="463.60" y1="431.00" x2="463.60" y2="434.50" stroke="#dcdcdc" stroke-width="1"/><line x1="466.60" y1="432.50" x2="466.60" y2="433.60" stroke="#707070" stroke-width="1"/><line x1="469.60" y1="432.00" x2="469.60" y2="434.00" stroke="#c4c4c4" stroke-width="1"/><line x1="472.60" y1="432.50" x2="472.60" y2="433.60" stroke="#707070" stroke-width="1"/><line x1="475.60" y1="432.00" x2="475.60" y2="434.00" stroke="#c4c4c4" stroke-width="1"/><line x1="478.60" y1="432.50" x2="478.60" y2="433.60" stroke="#707070" stroke-width="1"/><line x1="481.60" y1="432.00" x2="481.60" y2="434.00" stroke="#c4c4c4" stroke-width="1"/><line x1="484.60" y1="432.50" x2="484.60" y2="433.60" stroke="#707070" stroke-width="1"/><line x1="487.60" y1="432.00" x2="487.60" y2="434.00" stroke="#c4c4c4" stroke-width="1"/><line x1="490.60" y1="432.50" x2="490.60" y2="433.60" stroke="#707070" stroke-width="1"/><line x1="493.60" y1="431.00" x2="493.60" y2="434.50" stroke="#dcdcdc" stroke-width="1"/><line x1="496.60" y1="432.50" x2="496.60" y2="433.60" stroke="#707070" stroke-width="1"/><line x1="499.60" y1="432.00" x2="499.60" y2="434.00" stroke="#c4c4c4" stroke-width="1"/><line x1="502.60" y1="432.50" x2="502.60" y2="433.60" stroke="#707070" stroke-width="1"/><line x1="505.60" y1="432.00" x2="505.60" y2="434.00" stroke="#c4c4c4" stroke-width="1"/><line x1="508.60" y1="432.50" x2="508.60" y2="433.60" stroke="#707070" stroke-width="1"/><line x1="511.60" y1="432.00" x2="511.60" y2="434.00" stroke="#c4c4c4" stroke-width="1"/><line x1="514.60" y1="432.50" x2="514.60" y2="433.60" stroke="#707070" stroke-width="1"/><line x1="517.60" y1="432.00" x2="517.60" y2="434.00" stroke="#c4c4c4" stroke-width="1"/><line x1="520.60" y1="432.50" x2="520.60" y2="433.60" stroke="#707070" stroke-width="1"/><line x1="523.60" y1="431.00" x2="523.60" y2="434.50" stroke="#dcdcdc" stroke-width="1"/><line x1="526.60" y1="432.50" x2="526.60" y2="433.60" stroke="#707070" stroke-width="1"/><line x1="529.60" y1="432.00" x2="529.60" y2="434.00" stroke="#c4c4c4" stroke-width="1"/><line x1="532.60" y1="432.50" x2="532.60" y2="433.60" stroke="#707070" stroke-width="1"/><line x1="535.60" y1="432.00" x2="535.60" y2="434.00" stroke="#c4c4c4" stroke-width="1"/><line x1="538.60" y1="432.50" x2="538.60" y2="433.60" stroke="#707070" stroke-width="1"/><line x1="541.60" y1="432.00" x2="541.60" y2="434.00" stroke="#c4c4c4" stroke-width="1"/><line x1="544.60" y1="432.50" x2="544.60" y2="433.60" stroke="#707070" stroke-width="1"/><line x1="547.60" y1="432.00" x2="547.60" y2="434.00" stroke="#c4c4c4" stroke-width="1"/><line x1="550.60" y1="432.50" x2="550.60" y2="433.60" stroke="#707070" stroke-width="1"/><line x1="553.60" y1="431.00" x2="553.60" y2="434.50" stroke="#dcdcdc" stroke-width="1"/><line x1="556.60" y1="432.50" x2="556.60" y2="433.60" stroke="#707070" stroke-width="1"/><line x1="559.60" y1="432.00" x2="559.60" y2="434.00" stroke="#c4c4c4" stroke-width="1"/><line x1="562.60" y1="432.50" x2="562.60" y2="433.60" stroke="#707070" stroke-width="1"/><line x1="565.60" y1="432.00" x2="565.60" y2="434.00" stroke="#c4c4c4" stroke-width="1"/><line x1="568.60" y1="432.50" x2="568.60" y2="433.60" stroke="#707070" stroke-width="1"/><line x1="571.60" y1="432.00" x2="571.60" y2="434.00" stroke="#c4c4c4" stroke-width="1"/><line x1="574.60" y1="432.50" x2="574.60" y2="433.60" stroke="#707070" stroke-width="1"/><line x1="577.60" y1="432.00" x2="577.60" y2="434.00" stroke="#c4c4c4" stroke-width="1"/><line x1="580.60" y1="432.50" x2="580.60" y2="433.60" stroke="#707070" stroke-width="1"/><line x1="583.60" y1="431.00" x2="583.60" y2="434.50" stroke="#dcdcdc" stroke-width="1"/><line x1="586.60" y1="432.50" x2="586.60" y2="433.60" stroke="#707070" stroke-width="1"/><line x1="589.60" y1="432.00" x2="589.60" y2="434.00" stroke="#c4c4c4" stroke-width="1"/><line x1="592.60" y1="432.50" x2="592.60" y2="433.60" stroke="#707070" stroke-width="1"/><line x1="595.60" y1="432.00" x2="595.60" y2="434.00" stroke="#c4c4c4" stroke-width="1"/><line x1="598.60" y1="432.50" x2="598.60" y2="433.60" stroke="#707070" stroke-width="1"/><line x1="601.60" y1="432.00" x2="601.60" y2="434.00" stroke="#c4c4c4" stroke-width="1"/><line x1="604.60" y1="432.50" x2="604.60" y2="433.60" stroke="#707070" stroke-width="1"/><rect x="312" y="47.5" width="302" height="191.5" fill="#2b2b2b" /><g clip-path="url(#pv)"><defs><linearGradient id="stl" x1="0" x2="1" y1="0" y2="0"><stop offset="0" stop-color="#3c3c3c"/><stop offset="0.35" stop-color="#444"/><stop offset="1" stop-color="#484848"/></linearGradient></defs><rect x="312" y="47.5" width="24.5" height="192" fill="url(#stl)" /><rect x="589" y="47.5" width="25" height="192" fill="#444444" /><line x1="-734.84" y1="-3042.89" x2="230.84" y2="2878.89" stroke="rgba(255,255,255,0.11)" stroke-width="1.0"/><line x1="-2347.27" y1="-2229.06" x2="1843.27" y2="2065.06" stroke="rgba(255,255,255,0.11)" stroke-width="1.0"/><line x1="-2856.42" y1="-1570.97" x2="2352.42" y2="1406.97" stroke="rgba(255,255,255,0.11)" stroke-width="1.0"/><line x1="-3035.21" y1="-1201.70" x2="2531.21" y2="1037.70" stroke="rgba(255,255,255,0.11)" stroke-width="1.0"/><line x1="-3114.48" y1="-979.88" x2="2610.48" y2="815.88" stroke="#141414" stroke-width="1.0"/><line x1="-3156.06" y1="-834.62" x2="2652.06" y2="670.62" stroke="rgba(255,255,255,0.11)" stroke-width="1.0"/><line x1="-3180.54" y1="-732.88" x2="2676.54" y2="568.88" stroke="rgba(255,255,255,0.11)" stroke-width="1.0"/><line x1="-3196.21" y1="-657.90" x2="2692.21" y2="493.90" stroke="rgba(255,255,255,0.11)" stroke-width="1.0"/><line x1="-3206.86" y1="-600.45" x2="2702.86" y2="436.45" stroke="rgba(255,255,255,0.11)" stroke-width="1.0"/><line x1="-3214.46" y1="-555.09" x2="2710.46" y2="391.09" stroke="rgba(255,255,255,0.11)" stroke-width="1.0"/><line x1="-3220.09" y1="-518.38" x2="2716.09" y2="354.38" stroke="rgba(255,255,255,0.11)" stroke-width="1.0"/><line x1="-3224.39" y1="-488.08" x2="2720.39" y2="324.08" stroke="rgba(255,255,255,0.11)" stroke-width="1.0"/><line x1="-3227.75" y1="-462.65" x2="2723.75" y2="298.65" stroke="rgba(255,255,255,0.11)" stroke-width="1.0"/><line x1="-3230.44" y1="-441.00" x2="2726.44" y2="277.00" stroke="rgba(255,255,255,0.11)" stroke-width="1.0"/><line x1="-3232.63" y1="-422.37" x2="2728.63" y2="258.37" stroke="rgba(255,255,255,0.11)" stroke-width="1.0"/><line x1="-3234.44" y1="-406.15" x2="2730.44" y2="242.15" stroke="rgba(255,255,255,0.11)" stroke-width="1.0"/><line x1="-704.29" y1="-2686.37" x2="2166.29" y2="2582.37" stroke="rgba(255,255,255,0.11)" stroke-width="1.0"/><line x1="476.76" y1="-3041.21" x2="985.24" y2="2937.21" stroke="rgba(255,255,255,0.11)" stroke-width="1.0"/><line x1="1816.28" y1="-2848.81" x2="-354.28" y2="2744.81" stroke="rgba(255,255,255,0.11)" stroke-width="1.0"/><line x1="2706.56" y1="-2309.69" x2="-1244.56" y2="2205.69" stroke="rgba(255,255,255,0.11)" stroke-width="1.0"/><line x1="3158.15" y1="-1815.22" x2="-1696.15" y2="1711.22" stroke="#141414" stroke-width="1.0"/><line x1="3383.69" y1="-1453.15" x2="-1921.69" y2="1349.15" stroke="rgba(255,255,255,0.11)" stroke-width="1.0"/><line x1="3504.57" y1="-1195.36" x2="-2042.57" y2="1091.36" stroke="rgba(255,255,255,0.11)" stroke-width="1.0"/><line x1="3574.65" y1="-1007.85" x2="-2112.65" y2="903.85" stroke="rgba(255,255,255,0.11)" stroke-width="1.0"/><line x1="3618.12" y1="-867.20" x2="-2156.12" y2="763.20" stroke="rgba(255,255,255,0.11)" stroke-width="1.0"/><line x1="3646.61" y1="-758.57" x2="-2184.61" y2="654.57" stroke="rgba(255,255,255,0.11)" stroke-width="1.0"/><line x1="3666.13" y1="-672.48" x2="-2204.13" y2="568.48" stroke="rgba(255,255,255,0.11)" stroke-width="1.0"/><line x1="3680.01" y1="-602.75" x2="-2218.01" y2="498.75" stroke="rgba(255,255,255,0.11)" stroke-width="1.0"/><line x1="3690.18" y1="-545.21" x2="-2228.18" y2="441.21" stroke="rgba(255,255,255,0.11)" stroke-width="1.0"/><line x1="3697.81" y1="-496.98" x2="-2235.81" y2="392.98" stroke="rgba(255,255,255,0.11)" stroke-width="1.0"/><line x1="3703.67" y1="-456.00" x2="-2241.67" y2="352.00" stroke="rgba(255,255,255,0.11)" stroke-width="1.0"/><line x1="3708.25" y1="-420.76" x2="-2246.25" y2="316.76" stroke="rgba(255,255,255,0.11)" stroke-width="1.0"/><line x1="346.00" y1="152.50" x2="372.00" y2="139.50" stroke="#dcdcdc" stroke-width="1"/><line x1="347.00" y1="140.00" x2="374.00" y2="150.50" stroke="#dcdcdc" stroke-width="1"/></g><line x1="370.30" y1="297.10" x2="382.90" y2="297.10" stroke="#b8b8b8" stroke-width="1"/><line x1="376.60" y1="290.80" x2="376.60" y2="303.70" stroke="#b8b8b8" stroke-width="1"/><line x1="311.50" y1="47.50" x2="311.50" y2="430.00" stroke="#e4e4e4" stroke-width="1.2"/><line x1="9.00" y1="239.50" x2="614.00" y2="239.50" stroke="#e4e4e4" stroke-width="1.2"/><path d="M1.5 48.5 L4.7 48.5 L3.1 52.5 Z" fill="#f0f0f0"/><g fill="#8c8c8c" font-family="Liberation Sans" font-size="5.6"><text x="1.2" y="222.8">T</text><text x="1" y="228.8">O</text><text x="1.3" y="235">P</text></g><path d="M1.6 54.2 L3.6 54.2 L1.6 58.8 L3.6 58.8" stroke="#aaa" stroke-width="0.7" fill="none"/><path d="M1 434.5 L4.5 434.5 L2.75 430 Z" fill="#f0f0f0"/><path d="M5 435 L5 438.5 L9.5 436.75 Z" fill="#f0f0f0"/><path d="M1.2 424 L3 426 L4.8 424 M3 426 L3 428.5" stroke="#aaa" stroke-width="0.7" fill="none"/><path d="M12 435 L16 439.5 M16 435 L12 439.5" stroke="#aaa" stroke-width="0.7" fill="none"/><path d="M602 435.8 L605 435.8 L602 440 L605 440" stroke="#aaa" stroke-width="0.7" fill="none"/><path d="M607.5 437.8 L613 435.3 L613 440.3 Z" fill="#f0f0f0"/></svg>
<div class="a" style="left:0;top:0;width:614px;height:1.2px;background:#606066"></div>
<div class="a" style="left:0;top:1px;width:614px;height:13.8px;background:linear-gradient(#fbfbfc 0,#fbfbfc 7%,#e6e6ee 14%,#e8e8ef 45%,#fafafc 85%,#fcfcfd 100%)"></div>
<div class="a" style="left:0;top:14.8px;width:614px;height:11.7px;background:linear-gradient(#d8d8e0 0,#e0e0e9 12%,#e0e0e9 100%)"></div>
<div class="a" style="left:0;top:26.5px;width:614px;height:1px;background:#fafafc"></div>
<div class="a" style="left:0;top:27.5px;width:614px;height:20px;background:#dedee2"></div>
<svg class="a" style="left:1px;top:2px" width="10" height="11"><path d="M1 2 Q3 0.8 5 2.2 Q7 0.8 9 2 L9.2 5.5 Q8.5 9 5 10.6 Q1.5 9 0.8 5.5 Z" fill="#262628"/><path d="M2.5 3.2 Q3.5 2.4 5 3.6 Q6.5 2.4 7.5 3.2" stroke="#9a9aa0" stroke-width=".9" fill="none"/></svg>
<div class="t" style="left:16.81px;top:4.29px;font-size:40px;font-weight:bold;color:#b9b9bd;transform:scale(0.1907,0.1767);-webkit-text-stroke:0.5px #b9b9bd;">Shade</div>
<div class="t" style="left:3.44px;top:16.88px;font-size:40px;color:#a0a0aa;transform:scale(0.1388,0.1789);">ファイル(F)</div>
<div class="t" style="left:41.60px;top:17.26px;font-size:40px;color:#a0a0aa;transform:scale(0.1740,0.1700);">編集(E)</div>
<div class="t" style="left:73.32px;top:17.43px;font-size:40px;color:#a0a0aa;transform:scale(0.1846,0.1659);">表示(V)</div>
<div class="t" style="left:104.52px;top:16.88px;font-size:40px;color:#a0a0aa;transform:scale(0.1607,0.1789);">ツール(T)</div>
<div class="t" style="left:139.95px;top:16.88px;font-size:40px;color:#a0a0aa;transform:scale(0.1376,0.1789);">メッシュ(M)</div>
<div class="t" style="left:179.11px;top:17.08px;font-size:40px;color:#a0a0aa;transform:scale(0.1316,0.1744);">図形(G)</div>
<div class="t" style="left:211.18px;top:17.26px;font-size:40px;color:#a0a0aa;transform:scale(0.1365,0.1700);">レンダリング(R)</div>
<div class="t" style="left:259.61px;top:17.60px;font-size:40px;color:#a0a0aa;transform:scale(0.1304,0.1619);">スクリプト(S)</div>
<div class="t" style="left:303.61px;top:17.60px;font-size:40px;color:#a0a0aa;transform:scale(0.1304,0.1619);">プラグイン(P)</div>
<div class="t" style="left:344.82px;top:16.88px;font-size:40px;color:#a0a0aa;transform:scale(0.1355,0.1789);">ウィンドウ(W)</div>
<div class="t" style="left:389.33px;top:17.60px;font-size:40px;color:#a0a0aa;transform:scale(0.1686,0.1619);">ヘルプ(H)</div>
<div class="a" style="left:572.5px;top:1.5px;width:12px;height:12px;border-radius:2px;background:linear-gradient(#f6f6f8,#dcdce4);border:1px solid #c8c8d2"></div>
<div class="a" style="left:576.5px;top:9px;width:4px;height:1.3px;background:#6a6a6e"></div>
<div class="a" style="left:586.5px;top:1.5px;width:12px;height:12px;border-radius:2px;background:linear-gradient(#f6f6f8,#dcdce4);border:1px solid #c8c8d2"></div>
<div class="a" style="left:589.5px;top:5.5px;width:5px;height:5px;border:1px solid #a4a4ac"></div><div class="a" style="left:591px;top:4px;width:5px;height:5px;border-top:1px solid #a4a4ac;border-right:1px solid #a4a4ac"></div>
<div class="a" style="left:600px;top:1.5px;width:13px;height:12px;border-radius:2px;background:linear-gradient(#f2c0c0,#e6a4a4);border:1px solid #e0b0b0"></div>
<svg class="a" style="left:600px;top:1.5px" width="13" height="12"><path d="M3.5 3 L9.5 9 M9.5 3 L3.5 9" stroke="#fff" stroke-width="1.3"/></svg>
<div class="a" style="left:153.8px;top:1px;width:154px;height:12.8px;background:#fff;border-left:1px solid #d4d4dc;border-bottom:1px solid #dcdce2"></div>
<div class="a" style="left:155px;top:1.2px;width:152px;height:11.3px;background:linear-gradient(#f2f2f6,#f8f8fa)"></div>
<div class="t" style="left:155.42px;top:2.40px;font-size:40px;color:#55555c;transform:scale(0.1446,0.2000);">カメラ</div>
<div class="close" style="left:298px;top:3px"></div>
<div class="a" style="left:355px;top:0.5px;width:155px;height:19.5px;background:#f4f4f7;border:1px solid #cfcfd8;border-top:none;border-bottom-color:#fafafa"></div>
<div class="a" style="left:356px;top:1px;width:153px;height:12.5px;background:linear-gradient(#f0f0f4,#e4e4ea)"></div>
<div class="t" style="left:356.20px;top:3.51px;font-size:40px;color:#6a6a70;transform:scale(0.1504,0.1813);">カラー</div>
<div class="close" style="left:499px;top:4px"></div>
<div class="a" style="left:356px;top:13.5px;width:153px;height:5px;background:#dadae0"></div>
<div class="a" style="left:359px;top:16px;width:40px;height:1.5px;background:#fff"></div>
<div class="a" style="left:401px;top:16.5px;width:3px;height:1.5px;background:#333"></div>
<div class="a" style="left:407px;top:16px;width:22px;height:1.5px;background:#fff"></div>
<div class="a" style="left:10.5px;top:28.5px;width:30px;height:7px;background:#fff;border-right:1px solid #bbb;border-bottom:1px solid #ccc"></div>
<div class="t" style="left:11.23px;top:29.57px;font-size:40px;color:#222;transform:scale(0.1701,0.1308);">分割</div>
<svg class="a" style="left:36px;top:30.8px" width="4" height="3"><path d="M0 0 L3.3 0 L1.65 2.9Z" fill="#111"/></svg>
<div class="cb" style="left:42.7px;top:30px"></div>
<svg class="a" style="left:42.7px;top:30px" width="6" height="6"><path d="M1.2 2.9 L2.5 4.3 L4.6 1.3" stroke="#111" stroke-width="1" fill="none"/></svg>
<div class="t" style="left:49.97px;top:29.10px;font-size:40px;font-weight:bold;color:#222;transform:scale(0.1160,0.1425);-webkit-text-stroke:0.5px #222;">スナップ</div>
<div class="cb" style="left:73.3px;top:30px"></div>
<svg class="a" style="left:73.3px;top:30px" width="6" height="6"><path d="M1.2 2.9 L2.5 4.3 L4.6 1.3" stroke="#111" stroke-width="1" fill="none"/></svg>
<div class="t" style="left:80.38px;top:28.80px;font-size:40px;font-weight:bold;color:#222;transform:scale(0.1071,0.1500);-webkit-text-stroke:0.5px #222;">グリッド</div>
<div class="cb" style="left:102.4px;top:30px"></div>
<svg class="a" style="left:102.4px;top:30px" width="6" height="6"><path d="M1.2 2.9 L2.5 4.3 L4.6 1.3" stroke="#111" stroke-width="1" fill="none"/></svg>
<div class="t" style="left:109.80px;top:29.10px;font-size:40px;font-weight:bold;color:#222;transform:scale(0.1384,0.1425);-webkit-text-stroke:0.5px #222;">透視図グリッド</div>
<div class="cb" style="left:151.4px;top:30px"></div>
<div class="t" style="left:159.04px;top:29.10px;font-size:40px;font-weight:bold;color:#222;transform:scale(0.1294,0.1425);-webkit-text-stroke:0.5px #222;">セーフゾーン</div>
<div class="a" style="left:192.5px;top:28px;width:33px;height:8px;background:#fff;border-left:1px solid #aaa"></div>
<div class="t" style="left:216.46px;top:28.96px;font-size:40px;color:#333;transform:scale(0.1683,0.1571);">80</div>
<div class="cb" style="left:226.6px;top:30px"></div>
<div class="t" style="left:233.48px;top:28.26px;font-size:40px;font-weight:bold;color:#222;transform:scale(0.1295,0.1676);-webkit-text-stroke:0.5px #222;">ラージカーソル</div>
<div class="cb" style="left:274.8px;top:30px"></div>
<div class="t" style="left:282.09px;top:28.80px;font-size:40px;font-weight:bold;color:#222;transform:scale(0.1276,0.1500);-webkit-text-stroke:0.5px #222;">ラージポイント</div>
<div class="btn" style="left:321.5px;top:27.5px;width:33px;height:8.5px"></div>
<div class="t" style="left:324.50px;top:29.00px;font-size:40px;font-weight:bold;color:#222;transform:scale(0.1677,0.1415);-webkit-text-stroke:0.5px #222;">数値入力</div>
<svg class="a" style="left:0;top:37px" width="52" height="11"><path d="M1 10.5 L1 1.5 Q1 1 2 1 L45 1 L49 5 L49 10.5 Z" fill="#fafafc" stroke="#c8c8d0" stroke-width="1"/></svg>
<div class="t" style="left:2.69px;top:38.82px;font-size:40px;font-weight:bold;color:#333;transform:scale(0.1562,0.1964);-webkit-text-stroke:0.5px #333;">COP 357.SHD</div>
<svg class="a" style="left:607px;top:39.5px" width="5" height="4"><path d="M0.5 0.3 L4 3.7 M4 0.3 L0.5 3.7" stroke="#111" stroke-width="1"/></svg>
<div class="a" style="left:0;top:69px;width:42px;height:14.5px;background:linear-gradient(#f8f8fa,#e8e8ee);border:1px solid #d8d8e0"></div>
<div class="close" style="left:31px;top:72px"></div>
<div class="a" style="left:572px;top:58px;width:42px;height:13.5px;background:linear-gradient(#f8f8fa,#e8e8ee);border:1px solid #d8d8e0"></div>
<div class="close" style="left:603px;top:61px"></div>
<div class="a" style="left:45.5px;top:429.2px;width:363px;height:12.8px;background:linear-gradient(#fafafc,#e6e6ee);border-top:1px solid #f8f8f8"></div>
<div class="t" style="left:47.11px;top:432.26px;font-size:40px;color:#a6a6ac;transform:scale(0.1947,0.1842);">ShadeExplorer</div>
<div class="close" style="left:397.3px;top:432.7px"></div>
<div class="a" style="left:83.5px;top:209px;width:220.5px;height:201px;background:#f1f1f5;border:1px solid #d6d6de"></div>
<div class="a" style="left:84.5px;top:210px;width:218.5px;height:11px;background:linear-gradient(#f4f4f8,#e8e8ee)"></div>
<div class="t" style="left:84.37px;top:211.54px;font-size:40px;color:#8e8e96;transform:scale(0.1564,0.1912);">イメージウインドウ</div>
<div class="close" style="left:291.8px;top:211.8px"></div>
<div class="a" style="left:84.5px;top:221px;width:218.5px;height:10px;background:#ececf0"></div>
<svg class="a" style="left:87px;top:223px" width="6" height="6"><path d="M0 0 L5.5 2.75 L0 5.5Z" fill="#111"/></svg>
<div class="btn" style="left:102.5px;top:222px;width:36.5px;height:8px"></div>
<div class="t" style="left:104.34px;top:222.85px;font-size:40px;font-weight:bold;color:#222;transform:scale(0.1322,0.1500);-webkit-text-stroke:0.5px #222;">レンダリング</div>
<div class="btn" style="left:140px;top:222px;width:20px;height:8px"></div>
<div class="t" style="left:143.00px;top:222.84px;font-size:40px;color:#c4c4c4;transform:scale(0.1772,0.1579);">停止</div>
<div class="btn" style="left:161px;top:222px;width:17px;height:8px"></div>
<div class="t" style="left:163.00px;top:222.68px;font-size:40px;font-weight:bold;color:#222;transform:scale(0.1667,0.1579);-webkit-text-stroke:0.5px #222;">再開</div>
<div class="cb" style="left:182px;top:223px"></div>
<div class="t" style="left:190.00px;top:223.00px;font-size:40px;font-weight:bold;color:#222;transform:scale(0.1284,0.1463);-webkit-text-stroke:0.5px #222;">部分レンダリング</div>
<div class="btn" style="left:236px;top:222px;width:26px;height:8px"></div>
<div class="t" style="left:238.16px;top:222.85px;font-size:40px;font-weight:bold;color:#222;transform:scale(0.1625,0.1538);-webkit-text-stroke:0.5px #222;">編集</div>
<svg class="a" style="left:256.5px;top:224.5px" width="4" height="3"><path d="M0 0 L3.3 0 L1.65 2.9Z" fill="#111"/></svg>
<div class="btn" style="left:263px;top:222px;width:23px;height:8px"></div>
<div class="t" style="left:265.17px;top:222.85px;font-size:40px;font-weight:bold;color:#222;transform:scale(0.1696,0.1538);-webkit-text-stroke:0.5px #222;">保存...</div>
<div class="btn" style="left:288px;top:222px;width:15px;height:8px"></div>
<div class="a" style="left:0;top:0;width:302.5px;height:442px;overflow:hidden"><div class="t" style="left:289.50px;top:223.00px;font-size:40px;font-weight:bold;color:#222;transform:scale(0.1962,0.1500);-webkit-text-stroke:0.5px #222;">合成</div></div>
<div class="a" style="left:84.5px;top:231px;width:218.5px;height:158px;background:#f2f2f6"></div>
<div class="a" style="left:292px;top:231px;width:10px;height:158px;background:linear-gradient(90deg,#fbfbfd,#e8e8ee)"></div>
<div class="a" style="left:292.5px;top:231px;width:9px;height:8px;background:#eef0e6;border:1px solid #e0e4d4"></div>
<svg class="a" style="left:294px;top:232px" width="6" height="6"><path d="M1 4 L3 2 L5 4" stroke="#c8cabc" stroke-width="0.9" fill="none"/></svg>
<div class="a" style="left:292.5px;top:380px;width:9px;height:9px;background:#eef0e6;border:1px solid #e0e4d4"></div>
<svg class="a" style="left:294px;top:381.5px" width="6" height="6"><path d="M1 2 L3 4 L5 2" stroke="#c8cabc" stroke-width="0.9" fill="none"/></svg>
<div class="a" style="left:84.5px;top:381px;width:207.5px;height:8px;background:#e4e4ea"></div>
<div class="a" style="left:84.5px;top:389px;width:207.5px;height:9.5px;background:linear-gradient(#e8e8ee,#fbfbfd)"></div>
<div class="a" style="left:85px;top:389.5px;width:10px;height:9px;background:#eef0e6;border:1px solid #e0e4d4"></div>
<svg class="a" style="left:87px;top:391px" width="6" height="6"><path d="M4 1 L2 3 L4 5" stroke="#c8cabc" stroke-width="0.9" fill="none"/></svg>
<div class="a" style="left:283.5px;top:389.5px;width:8px;height:9px;background:#eef0e6;border:1px solid #e0e4d4"></div>
<svg class="a" style="left:284.5px;top:391px" width="6" height="6"><path d="M2 1 L4 3 L2 5" stroke="#c8cabc" stroke-width="0.9" fill="none"/></svg>
<div class="a" style="left:84.5px;top:398.5px;width:218.5px;height:11px;background:#ececf0"></div>
<div class="t" style="left:85.31px;top:400.50px;font-size:40px;font-weight:bold;color:#333;transform:scale(0.1375,0.1585);-webkit-text-stroke:0.5px #333;">レンダリング時間:</div>
<div class="t" style="left:150.85px;top:399.71px;font-size:40px;color:#333;transform:scale(0.1500,0.2143);">0</div>
<div class="t" style="left:159.00px;top:400.33px;font-size:40px;font-weight:bold;color:#333;transform:scale(0.1463,0.1667);-webkit-text-stroke:0.5px #333;">秒</div>
<div class="a" style="left:169.5px;top:400px;width:5.5px;height:8px;background:#fff;border:1px solid #999"></div>
<svg class="a" style="left:170.5px;top:403px" width="4" height="3"><path d="M0 0 L3.3 0 L1.65 2.9Z" fill="#111"/></svg>
<div class="t" style="left:177.87px;top:400.33px;font-size:40px;font-weight:bold;color:#333;transform:scale(0.1316,0.1667);-webkit-text-stroke:0.5px #333;">幅</div>
<div class="a" style="left:187px;top:400px;width:33px;height:8px;background:#fff;border-left:1px solid #bbb;border-top:1px solid #ccc"></div>
<div class="t" style="left:206.92px;top:400.43px;font-size:40px;color:#333;transform:scale(0.1905,0.1786);">320</div>
<div class="t" style="left:220.96px;top:401.20px;font-size:40px;color:#444;transform:scale(0.1795,0.1500);">px</div>
<div class="t" style="left:232.85px;top:400.66px;font-size:40px;font-weight:bold;color:#333;transform:scale(0.1528,0.1585);-webkit-text-stroke:0.5px #333;">高さ</div>
<div class="a" style="left:247px;top:400px;width:33px;height:8px;background:#fff;border-left:1px solid #bbb;border-top:1px solid #ccc"></div>
<div class="t" style="left:266.92px;top:400.43px;font-size:40px;color:#333;transform:scale(0.1905,0.1786);">240</div>
<div class="t" style="left:280.96px;top:401.20px;font-size:40px;color:#444;transform:scale(0.1795,0.1500);">px</div>
<div class="btn" style="left:295.5px;top:400px;width:7px;height:8px;border:1px solid #999"></div>
<div class="t" style="left:296.56px;top:400.43px;font-size:40px;color:#333;transform:scale(0.1458,0.1786);">R</div>
<svg class="a" style="left:92px;top:237px" width="192" height="144" viewBox="0 0 192 144"><defs>
<linearGradient id="carpet" x1="0" y1="0" x2="1" y2="1"><stop offset="0" stop-color="#a0988f"/><stop offset="0.5" stop-color="#a2998d"/><stop offset="1" stop-color="#a0978b"/></linearGradient>
<filter id="noise" x="0" y="0" width="100%" height="100%"><feTurbulence type="fractalNoise" baseFrequency="0.8" numOctaves="2" seed="7" result="n"/><feColorMatrix in="n" type="matrix" values="0 0 0 0 0.2  0 0 0 0 0.18  0 0 0 0 0.15  0 0 0 -3 1.6"/></filter>
<linearGradient id="slide" x1="0" y1="0" x2="0.2" y2="1"><stop offset="0" stop-color="#5e5b56"/><stop offset="0.5" stop-color="#57544f"/><stop offset="1" stop-color="#504d49"/></linearGradient>
<linearGradient id="face" x1="0" y1="0" x2="1" y2="1"><stop offset="0" stop-color="#6a6762"/><stop offset="1" stop-color="#56534e"/></linearGradient>
<linearGradient id="side" x1="0" y1="0" x2="1" y2="1"><stop offset="0" stop-color="#4a4743"/><stop offset="1" stop-color="#403e3a"/></linearGradient>
<radialGradient id="brass" cx="0.45" cy="0.45" r="0.6"><stop offset="0" stop-color="#b8ae50"/><stop offset="1" stop-color="#9e963c"/></radialGradient>
</defs><rect width="192" height="144" fill="url(#carpet)"/><rect width="192" height="144" filter="url(#noise)" opacity="0.4"/><rect width="192" height="1" fill="#c8c4be" opacity="0.7"/><rect width="1" height="144" fill="#c8c4be" opacity="0.5"/><ellipse cx="70" cy="35" rx="15" ry="8.5" fill="#363330"/><path d="M64 38 Q76 34 86 40 L86 46 L64 46Z" fill="#4e4843"/><path d="M94.2 42.7 L106 55 L124.3 56.5 L133.4 104.7 L136.8 116.2 L122 110 L111.7 95.6 L103.7 75 L100 60 Z" fill="#2e2c29"/><path d="M124.3 56.5 L147 54 L163.3 100 L160.4 107.4 L144.9 111.6 L133.4 104.7 Z" fill="url(#side)"/><path d="M128.0 57.0 L136.0 94.0" stroke="#32302c" stroke-width="0.8"/><path d="M130.9 56.6 L139.8 93.7" stroke="#32302c" stroke-width="0.8"/><path d="M133.8 56.3 L143.6 93.3" stroke="#32302c" stroke-width="0.8"/><path d="M136.7 56.0 L147.4 93.0" stroke="#32302c" stroke-width="0.8"/><path d="M139.6 55.6 L151.2 92.6" stroke="#32302c" stroke-width="0.8"/><path d="M142.5 55.2 L155.0 92.2" stroke="#32302c" stroke-width="0.8"/><path d="M145.4 54.9 L158.8 91.9" stroke="#32302c" stroke-width="0.8"/><path d="M151 84 L156.5 107" stroke="#32302c" stroke-width="0.9" fill="none"/><path d="M105.9 17.7 L141.2 21.2 L145.5 27 L147 52 L143 55 L106 55 L94.2 42.7 Z" fill="url(#face)"/><ellipse cx="115.8" cy="25.3" rx="8.3" ry="7.1" transform="rotate(12 115.8 25.3)" fill="#3e3a2c"/><ellipse cx="115.8" cy="25.3" rx="6.9" ry="5.8" transform="rotate(12 115.8 25.3)" fill="url(#brass)"/><ellipse cx="115.8" cy="25.3" rx="2.6" ry="2.1" fill="#cbbfc0"/><ellipse cx="131.6" cy="30.9" rx="8.3" ry="7.1" transform="rotate(12 131.6 30.9)" fill="#3e3a2c"/><ellipse cx="131.6" cy="30.9" rx="6.9" ry="5.8" transform="rotate(12 131.6 30.9)" fill="url(#brass)"/><ellipse cx="131.6" cy="30.9" rx="2.6" ry="2.1" fill="#cbbfc0"/><ellipse cx="104.0" cy="39.1" rx="8.3" ry="7.1" transform="rotate(12 104.0 39.1)" fill="#3e3a2c"/><ellipse cx="104.0" cy="39.1" rx="6.9" ry="5.8" transform="rotate(12 104.0 39.1)" fill="url(#brass)"/><ellipse cx="104.0" cy="39.1" rx="2.6" ry="2.1" fill="#cbbfc0"/><ellipse cx="119.6" cy="45.6" rx="8.3" ry="7.1" transform="rotate(12 119.6 45.6)" fill="#3e3a2c"/><ellipse cx="119.6" cy="45.6" rx="6.9" ry="5.8" transform="rotate(12 119.6 45.6)" fill="url(#brass)"/><ellipse cx="119.6" cy="45.6" rx="2.6" ry="2.1" fill="#cbbfc0"/><circle cx="117.2" cy="35" r="2.3" fill="#22201e"/><path d="M0 33.3 L24.4 22.1 L36.7 26.1 L104.3 50.5 Q106 52 105.5 56 L104 75 L94 96 L0 97Z" fill="url(#slide)"/><path d="M38 26 L104.3 50.5 L104.8 62 L44 42Z" fill="#68655f"/><path d="M37 26 L104.3 50.3" stroke="#8e8b85" stroke-width="1.1"/><path d="M40 31.5 L104.5 54" stroke="#7c7973" stroke-width="0.8"/><path d="M42 35.5 L104.5 57.5" stroke="#3c3a36" stroke-width="0.9"/><path d="M44 42 L104.8 62" stroke="#75726c" stroke-width="0.8"/><path d="M0 33.5 L23.5 22 Q33 23.5 38 29 L43.8 43.5 L41 51 Q35 56 29 59 L8 66 L0 67Z" fill="#6c6862"/><path d="M0 36.5 L22 26 Q30 27 34 32 L38.5 44 L36.5 49 Q32 53 26 55.5 L6 62 L0 63Z" fill="#58565a"/><path d="M1 46 L12 41 L15 54 L3 58Z" fill="#6a5460" opacity="0.3"/><path d="M103.7 75 L111.7 95.6 L93.4 95.6Z" fill="#a69d91"/><path d="M0 96 L94 96 L140.3 102 L145 111.6 L133.4 118.4 L120 118 L120 144 L0 144Z" fill="#4a4844"/><path d="M92.3 94.4 L140.3 101.5 L141.5 104.7 L92.3 97.5Z" fill="#2a2826"/><path d="M21 104.5 L72 107 L70 145 L3 145Z" fill="#1c1b19"/><path d="M0 100.6 L29 101" stroke="#a09c94" stroke-width="0.8"/><path d="M91 112 Q121 108 125 117 L123 144 L83 144 Q85 121 91 112Z" fill="#2e2c2a"/><path d="M95 115.5 Q114 112.5 118.5 119 L117 144 L87.5 144 Q89 124 95 115.5Z" fill="#aca498"/><circle cx="106" cy="131" r="2.1" fill="#b07850"/><path d="M122 111.6 L145 111.6 L149 123 L123 125Z" fill="#4a4844"/></svg>
<div class="a" style="left:489.5px;top:148.5px;width:124.5px;height:274px;background:#e0dfe5;border:1px solid #f4f4f8;border-right:3px solid #b4b2c4"></div>
<div class="a" style="left:490.8px;top:160.5px;width:120.5px;height:260.5px;border:1px solid #a8a8b4;border-right:none;border-top:none"></div>
<div class="a" style="left:490px;top:149.5px;width:122px;height:11px;background:linear-gradient(#e4e4ee,#f6f6fa)"></div>
<div class="t" style="left:491.06px;top:152.50px;font-size:40px;font-weight:bold;color:#111;transform:scale(0.1460,0.1750);-webkit-text-stroke:0.5px #111;">ブラウザ</div>
<div class="close" style="left:602px;top:152.5px"></div>
<div class="a" style="left:490px;top:160.5px;width:122px;height:10.5px;background:#ebebef"></div>
<svg class="a" style="left:492px;top:162.5px" width="19" height="7"><path d="M0.3 3.5 L3.8 0.5 L3.8 2.3 L8.5 2.3 L8.5 4.7 L3.8 4.7 L3.8 6.5 Z M18.7 3.5 L15.2 0.5 L15.2 2.3 L10.5 2.3 L10.5 4.7 L15.2 4.7 L15.2 6.5 Z" fill="#8c8c8c"/></svg>
<div class="btn" style="left:511px;top:161.5px;width:26px;height:9px"></div>
<div class="t" style="left:514.84px;top:162.47px;font-size:40px;color:#222;transform:scale(0.1558,0.1632);">選択</div>
<svg class="a" style="left:533px;top:165px" width="4" height="3"><path d="M0 0 L3.3 0 L1.65 2.9Z" fill="#111"/></svg>
<div class="btn" style="left:538px;top:161.5px;width:33px;height:9px"></div>
<div class="t" style="left:540.58px;top:161.97px;font-size:40px;color:#222;transform:scale(0.1410,0.1719);">マーカー</div>
<svg class="a" style="left:566.5px;top:165px" width="4" height="3"><path d="M0 0 L3.3 0 L1.65 2.9Z" fill="#111"/></svg>
<div class="btn" style="left:572px;top:161.5px;width:24px;height:9px"></div>
<div class="t" style="left:575.15px;top:162.64px;font-size:40px;color:#222;transform:scale(0.1519,0.1632);">情報</div>
<svg class="a" style="left:591px;top:165px" width="4" height="3"><path d="M0 0 L3.3 0 L1.65 2.9Z" fill="#111"/></svg>
<svg class="a" style="left:597px;top:163px" width="12" height="7"><rect x="0.5" y="0.5" width="1" height="6" fill="#555"/><path d="M4 3.5 L10 0.5 L10 6.5Z" fill="#111"/></svg>
<div class="a" style="left:490px;top:171px;width:122px;height:5.5px;background:linear-gradient(#dcdce2,#f4f4f2)"></div>
<svg class="a" style="left:548px;top:171.5px" width="6" height="4"><path d="M0.5 3 L3 0.5 L5.5 3Z" fill="#333"/></svg>
<div class="a" style="left:493px;top:177px;width:89px;height:7.5px;background:#e8e8e8;border:1px solid #c8c8c8;border-bottom-color:#a8a8a8"></div>
<div class="t" style="left:503.86px;top:177.76px;font-size:40px;color:#333;transform:scale(0.1373,0.1471);">ルートパート</div>
<div class="a" style="left:584px;top:177.5px;width:7px;height:6.5px;background:#f2f2f2;border:1px solid #bbb"></div>
<div class="a" style="left:593.5px;top:177.5px;width:7px;height:6.5px;background:#f2f2f2;border:1px solid #bbb"></div>
<svg class="a" style="left:584px;top:177.5px" width="17" height="7"><path d="M2.2 3.8 Q3.9 1.8 5.6 3.8 Q3.9 5.2 2.2 3.8Z M3 2.2 L4.8 2.2" stroke="#444" stroke-width="0.9" fill="#555"/><circle cx="13.2" cy="3.6" r="2.2" fill="#5a5a5a"/><circle cx="13.8" cy="3.2" r="0.9" fill="#ddd"/></svg>
<div class="a" style="left:600.7px;top:176.5px;width:10.3px;height:230.5px;background:linear-gradient(90deg,#e6e6ec,#fdfdfe)"></div>
<div class="a" style="left:602.5px;top:177px;width:9px;height:8px;background:#f0f2e8;border:1px solid #e4e6d8"></div>
<svg class="a" style="left:604px;top:178px" width="6" height="6"><path d="M1 4 L3 2 L5 4" stroke="#c8cabc" stroke-width="0.9" fill="none"/></svg>
<div class="a" style="left:602.5px;top:397.5px;width:9px;height:9px;background:#f0f2e8;border:1px solid #e4e6d8"></div>
<svg class="a" style="left:604px;top:399px" width="6" height="6"><path d="M1 2 L3 4 L5 2" stroke="#c8cabc" stroke-width="0.9" fill="none"/></svg>
<div class="a" style="left:490px;top:397px;width:112px;height:10px;background:#e3e3e9"></div>
<div class="a" style="left:491px;top:397.5px;width:90px;height:9.5px;background:linear-gradient(#e8e8ee,#fcfcfd)"></div>
<div class="a" style="left:491px;top:397.5px;width:10px;height:9px;background:#eef0e6;border:1px solid #e2e4d6"></div>
<svg class="a" style="left:493px;top:399px" width="6" height="6"><path d="M4 1 L2 3 L4 5" stroke="#c8cabc" stroke-width="0.9" fill="none"/></svg>
<div class="a" style="left:574px;top:397.5px;width:8px;height:9px;background:#eef0e6;border:1px solid #e2e4d6"></div>
<svg class="a" style="left:575px;top:399px" width="6" height="6"><path d="M2 1 L4 3 L2 5" stroke="#c8cabc" stroke-width="0.9" fill="none"/></svg>
<div class="a" style="left:490px;top:407px;width:122px;height:4px;background:#f4f4f2;border-top:1px solid #c8c8c0;border-bottom:1px solid #c8c8c0"></div>
<svg class="a" style="left:548px;top:407.5px" width="6" height="4"><path d="M0.5 3 L3 0.5 L5.5 3Z" fill="#333"/></svg>
<div class="t" style="left:492.47px;top:413.03px;font-size:40px;color:#444;transform:scale(0.1768,0.1368);">1 / 1 選択</div>
</body></html>
